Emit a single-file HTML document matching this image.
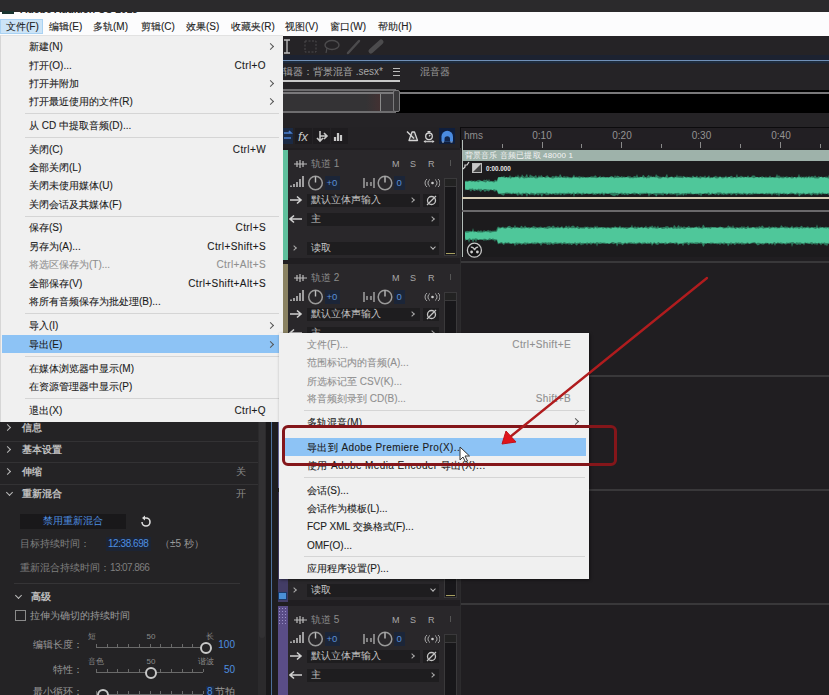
<!DOCTYPE html>
<html><head><meta charset="utf-8"><style>
*{box-sizing:border-box}
html,body{margin:0;padding:0}
body{width:829px;height:695px;overflow:hidden;position:relative;background:#201e21;font-family:"Liberation Sans",sans-serif;font-size:10px;color:#222}
.a{position:absolute}
.t{position:absolute;white-space:nowrap;line-height:12px}
.k{-webkit-text-stroke:0.1px currentColor}
.mi{position:absolute;top:21px;line-height:12px;white-space:nowrap;color:#222;font-size:10px}
.it{position:absolute;left:29px;white-space:nowrap;line-height:12px;color:#1b1b1b}
.sc{position:absolute;white-space:nowrap;line-height:12px;color:#1b1b1b;text-align:right}
.dis{color:#8f8f8f}
.sep{position:absolute;height:1px;background:#d5d5d5}
.chev{position:absolute;width:5px;height:5px;border-right:1px solid #555;border-top:1px solid #555;transform:rotate(45deg)}
</style></head><body>
<div class="a" style="left:0px;top:0px;width:829px;height:12px;background:#2b2a2c;"></div>
<div class="a" style="left:0px;top:12px;width:829px;height:24px;background:#fcfcfd;"></div>
<div class="t " style="left:20px;top:3px;font-size:10.5px;color:#2b2a2c;font-weight:bold;letter-spacing:-0.2px">Adobe Audition CC 2015</div>
<div class="a" style="left:2px;top:11px;width:12px;height:3px;background:#17322f;"></div>
<div class="a" style="left:0px;top:36px;width:829px;height:91px;background:#252326;"></div>
<div class="a" style="left:0px;top:19px;width:43px;height:15px;background:#cce4f7;border:1px solid #a9d2f3"></div>
<div class="t k" style="left:6px;top:21px;color:#222;">文件(F)</div>
<div class="t k" style="left:49px;top:21px;color:#222;">编辑(E)</div>
<div class="t k" style="left:93px;top:21px;color:#222;">多轨(M)</div>
<div class="t k" style="left:141px;top:21px;color:#222;">剪辑(C)</div>
<div class="t k" style="left:186px;top:21px;color:#222;">效果(S)</div>
<div class="t k" style="left:231px;top:21px;color:#222;">收藏夹(R)</div>
<div class="t k" style="left:285px;top:21px;color:#222;">视图(V)</div>
<div class="t k" style="left:330px;top:21px;color:#222;">窗口(W)</div>
<div class="t k" style="left:378px;top:21px;color:#222;">帮助(H)</div>
<svg class="a" style="left:280px;top:36px" width="120" height="22" viewBox="0 0 120 22"><path d="M4 4h6M7 4v13M4 17h6" stroke="#bdbdbd" stroke-width="1.3" fill="none"/><rect x="25" y="5" width="11" height="11" stroke="#4c4b4d" stroke-width="1" stroke-dasharray="2 1.5" fill="none"/><ellipse cx="52" cy="9" rx="7" ry="4.5" stroke="#4c4b4d" stroke-width="1.4" fill="none"/><path d="M47 12 l-1 5" stroke="#4c4b4d" stroke-width="1.2"/><path d="M68 17 L79 5" stroke="#4c4b4d" stroke-width="2.5" stroke-linecap="round"/><path d="M91 15 L101 6" stroke="#4c4b4d" stroke-width="5" stroke-linecap="round"/></svg>
<div class="a" style="left:0px;top:55px;width:829px;height:9px;background:#1c2231;"></div>
<div class="a" style="left:0px;top:60px;width:829px;height:1px;background:#7090b8;"></div>
<div class="a" style="left:0px;top:61px;width:829px;height:2px;background:#1f2c3c;"></div>
<div class="t " style="left:273px;top:66px;color:#a8a8a8;">编辑器：背景混音 .sesx*</div>
<div class="a" style="left:393px;top:68px;width:7px;height:8px;border-top:1px solid #bbb;border-bottom:1px solid #bbb"></div>
<div class="a" style="left:393px;top:71px;width:7px;height:1px;background:#bbb;"></div>
<div class="a" style="left:283px;top:80px;width:117px;height:2px;background:#c8c8c8;"></div>
<div class="t " style="left:420px;top:66px;color:#9a9a9a;">混音器</div>
<div class="a" style="left:278px;top:90px;width:551px;height:23px;background:#000;"></div>
<div class="a" style="left:278px;top:90px;width:118px;height:23px;background:#343335;"></div>
<div class="a" style="left:381px;top:94px;width:15px;height:18px;background:#3c3a3d;"></div>
<div class="a" style="left:278px;top:89px;width:118px;height:2px;background:#6e6d6f;"></div>
<div class="a" style="left:278px;top:92px;width:551px;height:2px;background:#7a797b;"></div>
<div class="a" style="left:278px;top:111px;width:118px;height:2px;background:#6e6d6f;"></div>
<div class="a" style="left:366px;top:94px;width:14px;height:17px;background:linear-gradient(90deg,rgba(90,40,40,0),rgba(100,45,45,.3))"></div>
<div class="a" style="left:380px;top:94px;width:1px;height:17px;background:#8a8a8a;"></div>
<div class="a" style="left:393px;top:90px;width:7px;height:22px;border:1.5px solid #7a797b;border-radius:2px;background:#3a393b"></div>
<div class="a" style="left:278px;top:127px;width:183px;height:21px;background:#242225;"></div>
<div class="a" style="left:461px;top:127px;width:368px;height:21px;background:#221f23;"></div>
<div class="a" style="left:461px;top:127px;width:368px;height:1px;background:#0c0b0d;"></div>
<div class="a" style="left:460px;top:127px;width:1px;height:21px;background:#0c0b0d;"></div>
<div class="a" style="left:460px;top:148px;width:1px;height:547px;background:#2c2b2d;"></div>
<div class="a" style="left:295px;top:128px;width:17px;height:16px;background:#1e1c1f;"></div>
<div class="a" style="left:313px;top:128px;width:17px;height:16px;background:#1e1c1f;"></div>
<div class="a" style="left:331px;top:128px;width:17px;height:16px;background:#1e1c1f;"></div>
<div class="a" style="left:283px;top:128px;width:10px;height:16px;background:#1b2a44;"></div>
<svg class="a" style="left:283px;top:128px" width="70" height="16" viewBox="0 0 70 16"><path d="M1 5h7l-2-2M1 10h7" stroke="#4a7fd0" stroke-width="1.6" fill="none"/><text x="15" y="12.5" font-family="Liberation Sans" font-style="italic" font-size="13" fill="#c4c4c4">fx</text><path d="M37 3v10M34 10l3 3 3-3M37 8h7M41 5l3 3-3 3" stroke="#c9c9c9" stroke-width="1.6" fill="none"/><path d="M52 13v-4M55 13v-8M58 13v-6" stroke="#c9c9c9" stroke-width="2.2" fill="none"/></svg>
<svg class="a" style="left:400px;top:124px" width="60" height="26" viewBox="0 0 60 26"><path d="M9 16.5 L12 8 L14.5 8 L17.5 16.5 Z" stroke="#d4d4d4" stroke-width="1.3" fill="#3a393b" stroke-linejoin="round"/><path d="M7 7.5 L14 14.5" stroke="#d4d4d4" stroke-width="1.4"/><circle cx="29" cy="12.3" r="3.3" stroke="#d4d4d4" stroke-width="1.3" fill="none"/><path d="M29 12.3 l1.3-1.3M27.5 7.5h3M29 7.5v1.5" stroke="#d4d4d4" stroke-width="1.2" fill="none"/><path d="M25 17.5h8" stroke="#bdbdbd" stroke-width="1.5"/><path d="M23.5 17.5l2-1.6v3.2z M34.5 17.5l-2-1.6v3.2z" fill="#d4d4d4"/><rect x="39" y="4" width="16" height="16" fill="#0f1e3c"/><path d="M41.5 17.5 V12.5 a5.75 5.75 0 0 1 11.5 0 V17.5 Z" fill="#4a8be0"/><path d="M47.25 11.5 V17.5 M44.5 15 a2.75 2.75 0 0 1 5.5 0 V17.5 h-5.5 Z" stroke="none" fill="#13264a"/><path d="M42 18h2M50.5 18h2" stroke="#a8c8f0" stroke-width="1"/></svg>
<div class="t " style="left:464px;top:130px;color:#8e8e8e;">hms</div>
<div class="t" style="left:522px;width:40px;text-align:center;top:130px;color:#949494">0:10</div>
<div class="t" style="left:602px;width:40px;text-align:center;top:130px;color:#949494">0:20</div>
<div class="t" style="left:681.5px;width:40px;text-align:center;top:130px;color:#949494">0:30</div>
<div class="t" style="left:761px;width:40px;text-align:center;top:130px;color:#949494">0:40</div>
<div class="a" style="left:462px;top:142px;width:1px;height:6px;background:#8a8a8a;"></div>
<div class="a" style="left:502px;top:144px;width:1px;height:4px;background:#8a8a8a;"></div>
<div class="a" style="left:542px;top:142px;width:1px;height:6px;background:#8a8a8a;"></div>
<div class="a" style="left:581px;top:144px;width:1px;height:4px;background:#8a8a8a;"></div>
<div class="a" style="left:621px;top:142px;width:1px;height:6px;background:#8a8a8a;"></div>
<div class="a" style="left:661px;top:144px;width:1px;height:4px;background:#8a8a8a;"></div>
<div class="a" style="left:700px;top:142px;width:1px;height:6px;background:#8a8a8a;"></div>
<div class="a" style="left:740px;top:144px;width:1px;height:4px;background:#8a8a8a;"></div>
<div class="a" style="left:780px;top:142px;width:1px;height:6px;background:#8a8a8a;"></div>
<div class="a" style="left:820px;top:144px;width:1px;height:4px;background:#8a8a8a;"></div>
<div class="a" style="left:860px;top:142px;width:1px;height:6px;background:#8a8a8a;"></div>
<div class="a" style="left:899px;top:144px;width:1px;height:4px;background:#8a8a8a;"></div>
<div class="a" style="left:278px;top:150px;width:10px;height:110px;background:#5fbf9c;"></div>
<div class="a" style="left:288px;top:150px;width:172px;height:108px;background:#29272a;"></div>
<div class="a" style="left:461px;top:261px;width:368px;height:2px;background:#39383a;"></div>
<svg class="a" style="left:294px;top:159px" width="14" height="10" viewBox="0 0 14 10"><path d="M0 5h13M3 2v6M6 1v8M9 2v6" stroke="#bcbcbc" stroke-width="1.2"/></svg>
<div class="t " style="left:311px;top:158px;color:#8c8c8c;">轨道 1</div>
<div class="t " style="left:392px;top:158px;font-size:9px;color:#a8a8a8;">M</div>
<div class="t " style="left:410px;top:158px;font-size:9px;color:#a8a8a8;">S</div>
<div class="t " style="left:428px;top:158px;font-size:9px;color:#a8a8a8;">R</div>
<div class="a" style="left:450px;top:160px;width:1px;height:6px;background:#555;"></div>
<svg class="a" style="left:290px;top:174px" width="150" height="18" viewBox="0 0 150 18"><path d="M1 14v-1.5M4 14v-3M7 14v-5M10 14v-8M13 14v-11" stroke="#bdbdbd" stroke-width="1.6" transform="translate(0,-1)"/><circle cx="25.5" cy="9" r="6.8" stroke="#9a9a9a" stroke-width="1.5" fill="none"/><path d="M25.5 2.5v6" stroke="#bdbdbd" stroke-width="1.4"/><rect x="35" y="2" width="15" height="14" fill="#1b2538"/><text x="36.5" y="12.3" font-size="9.5" fill="#5a8fd6" font-family="Liberation Sans">+0</text><path d="M74 4v10M84 4v10M77 8v4M81 8v4M79 10h0.1" stroke="#a9a9a9" stroke-width="1.4"/><circle cx="95" cy="9" r="6.8" stroke="#9a9a9a" stroke-width="1.5" fill="none"/><path d="M95 2.5v6" stroke="#bdbdbd" stroke-width="1.4"/><rect x="104" y="2" width="11" height="14" fill="#1b2538"/><text x="106.5" y="12.3" font-size="9.5" fill="#5a8fd6" font-family="Liberation Sans">0</text><path d="M137 5 a5 5 0 0 0 0 8M140 5.5 a4 4 0 0 0 0 7M148 5 a5 5 0 0 1 0 8M145 5.5 a4 4 0 0 1 0 7" stroke="#aaa" stroke-width="1" fill="none"/><circle cx="142.5" cy="9" r="1.3" fill="#ccc"/></svg>
<div class="a" style="left:307px;top:194px;width:113px;height:13px;background:#1e1d1f;"></div>
<svg class="a" style="left:289px;top:195px" width="14" height="10"><path d="M1 5h11M8 1.5l4 3.5-4 3.5" stroke="#d0d0d0" stroke-width="1.6" fill="none"/></svg>
<div class="t " style="left:311px;top:194px;color:#c4c4c4;">默认立体声输入</div>
<div class="chev" style="left:410px;top:198px;border-color:#aaa;width:4px;height:4px"></div>
<div class="a" style="left:423px;top:194px;width:16px;height:13px;background:#1e1d1f;"></div>
<svg class="a" style="left:425px;top:194px" width="13" height="13"><circle cx="6.5" cy="6.5" r="4" stroke="#c4c4c4" stroke-width="1.3" fill="none"/><path d="M2 11L11 2" stroke="#c4c4c4" stroke-width="1.3"/></svg>
<div class="a" style="left:307px;top:213px;width:132px;height:13px;background:#1e1d1f;"></div>
<svg class="a" style="left:289px;top:214px" width="14" height="10"><path d="M13 5H2M5 1.5L1 5l4 3.5" stroke="#d0d0d0" stroke-width="1.6" fill="none"/></svg>
<div class="t " style="left:311px;top:213px;color:#c4c4c4;">主</div>
<div class="chev" style="left:430px;top:217px;border-color:#aaa;width:4px;height:4px"></div>
<div class="chev" style="left:292px;top:246px;border-color:#aaa;width:4px;height:4px"></div>
<div class="a" style="left:307px;top:242px;width:132px;height:13px;background:#1e1d1f;"></div>
<div class="t " style="left:311px;top:242px;color:#c4c4c4;">读取</div>
<div class="chev" style="left:431px;top:245px;border-color:#bbb;width:4px;height:4px;transform:rotate(135deg)"></div>
<div class="a" style="left:444px;top:178px;width:13px;height:78px;background:#18171a;border:1px solid #3a393b"></div>
<div class="a" style="left:445px;top:179px;width:11px;height:8px;background:#222;border-bottom:1px solid #3a393b"></div>
<div class="a" style="left:446px;top:253px;width:9px;height:1px;background:#a8a060;"></div>
<div class="a" style="left:278px;top:264px;width:10px;height:110px;background:#8a8262;"></div>
<div class="a" style="left:288px;top:264px;width:172px;height:108px;background:#29272a;"></div>
<div class="a" style="left:461px;top:375px;width:368px;height:2px;background:#39383a;"></div>
<svg class="a" style="left:294px;top:273px" width="14" height="10" viewBox="0 0 14 10"><path d="M0 5h13M3 2v6M6 1v8M9 2v6" stroke="#bcbcbc" stroke-width="1.2"/></svg>
<div class="t " style="left:311px;top:272px;color:#8c8c8c;">轨道 2</div>
<div class="t " style="left:392px;top:272px;font-size:9px;color:#a8a8a8;">M</div>
<div class="t " style="left:410px;top:272px;font-size:9px;color:#a8a8a8;">S</div>
<div class="t " style="left:428px;top:272px;font-size:9px;color:#a8a8a8;">R</div>
<div class="a" style="left:450px;top:274px;width:1px;height:6px;background:#555;"></div>
<svg class="a" style="left:290px;top:288px" width="150" height="18" viewBox="0 0 150 18"><path d="M1 14v-1.5M4 14v-3M7 14v-5M10 14v-8M13 14v-11" stroke="#bdbdbd" stroke-width="1.6" transform="translate(0,-1)"/><circle cx="25.5" cy="9" r="6.8" stroke="#9a9a9a" stroke-width="1.5" fill="none"/><path d="M25.5 2.5v6" stroke="#bdbdbd" stroke-width="1.4"/><rect x="35" y="2" width="15" height="14" fill="#1b2538"/><text x="36.5" y="12.3" font-size="9.5" fill="#5a8fd6" font-family="Liberation Sans">+0</text><path d="M74 4v10M84 4v10M77 8v4M81 8v4M79 10h0.1" stroke="#a9a9a9" stroke-width="1.4"/><circle cx="95" cy="9" r="6.8" stroke="#9a9a9a" stroke-width="1.5" fill="none"/><path d="M95 2.5v6" stroke="#bdbdbd" stroke-width="1.4"/><rect x="104" y="2" width="11" height="14" fill="#1b2538"/><text x="106.5" y="12.3" font-size="9.5" fill="#5a8fd6" font-family="Liberation Sans">0</text><path d="M137 5 a5 5 0 0 0 0 8M140 5.5 a4 4 0 0 0 0 7M148 5 a5 5 0 0 1 0 8M145 5.5 a4 4 0 0 1 0 7" stroke="#aaa" stroke-width="1" fill="none"/><circle cx="142.5" cy="9" r="1.3" fill="#ccc"/></svg>
<div class="a" style="left:307px;top:308px;width:113px;height:13px;background:#1e1d1f;"></div>
<svg class="a" style="left:289px;top:309px" width="14" height="10"><path d="M1 5h11M8 1.5l4 3.5-4 3.5" stroke="#d0d0d0" stroke-width="1.6" fill="none"/></svg>
<div class="t " style="left:311px;top:308px;color:#c4c4c4;">默认立体声输入</div>
<div class="chev" style="left:410px;top:312px;border-color:#aaa;width:4px;height:4px"></div>
<div class="a" style="left:423px;top:308px;width:16px;height:13px;background:#1e1d1f;"></div>
<svg class="a" style="left:425px;top:308px" width="13" height="13"><circle cx="6.5" cy="6.5" r="4" stroke="#c4c4c4" stroke-width="1.3" fill="none"/><path d="M2 11L11 2" stroke="#c4c4c4" stroke-width="1.3"/></svg>
<div class="a" style="left:307px;top:327px;width:132px;height:13px;background:#1e1d1f;"></div>
<svg class="a" style="left:289px;top:328px" width="14" height="10"><path d="M13 5H2M5 1.5L1 5l4 3.5" stroke="#d0d0d0" stroke-width="1.6" fill="none"/></svg>
<div class="t " style="left:311px;top:327px;color:#c4c4c4;">主</div>
<div class="chev" style="left:430px;top:331px;border-color:#aaa;width:4px;height:4px"></div>
<div class="chev" style="left:292px;top:360px;border-color:#aaa;width:4px;height:4px"></div>
<div class="a" style="left:307px;top:356px;width:132px;height:13px;background:#1e1d1f;"></div>
<div class="t " style="left:311px;top:356px;color:#c4c4c4;">读取</div>
<div class="chev" style="left:431px;top:359px;border-color:#bbb;width:4px;height:4px;transform:rotate(135deg)"></div>
<div class="a" style="left:444px;top:292px;width:13px;height:78px;background:#18171a;border:1px solid #3a393b"></div>
<div class="a" style="left:445px;top:293px;width:11px;height:8px;background:#222;border-bottom:1px solid #3a393b"></div>
<div class="a" style="left:446px;top:367px;width:9px;height:1px;background:#a8a060;"></div>
<div class="a" style="left:278px;top:378px;width:10px;height:110px;background:#6a6aa0;"></div>
<div class="a" style="left:288px;top:378px;width:172px;height:108px;background:#29272a;"></div>
<div class="a" style="left:461px;top:489px;width:368px;height:2px;background:#39383a;"></div>
<svg class="a" style="left:294px;top:387px" width="14" height="10" viewBox="0 0 14 10"><path d="M0 5h13M3 2v6M6 1v8M9 2v6" stroke="#bcbcbc" stroke-width="1.2"/></svg>
<div class="t " style="left:311px;top:386px;color:#8c8c8c;">轨道 3</div>
<div class="t " style="left:392px;top:386px;font-size:9px;color:#a8a8a8;">M</div>
<div class="t " style="left:410px;top:386px;font-size:9px;color:#a8a8a8;">S</div>
<div class="t " style="left:428px;top:386px;font-size:9px;color:#a8a8a8;">R</div>
<div class="a" style="left:450px;top:388px;width:1px;height:6px;background:#555;"></div>
<svg class="a" style="left:290px;top:402px" width="150" height="18" viewBox="0 0 150 18"><path d="M1 14v-1.5M4 14v-3M7 14v-5M10 14v-8M13 14v-11" stroke="#bdbdbd" stroke-width="1.6" transform="translate(0,-1)"/><circle cx="25.5" cy="9" r="6.8" stroke="#9a9a9a" stroke-width="1.5" fill="none"/><path d="M25.5 2.5v6" stroke="#bdbdbd" stroke-width="1.4"/><rect x="35" y="2" width="15" height="14" fill="#1b2538"/><text x="36.5" y="12.3" font-size="9.5" fill="#5a8fd6" font-family="Liberation Sans">+0</text><path d="M74 4v10M84 4v10M77 8v4M81 8v4M79 10h0.1" stroke="#a9a9a9" stroke-width="1.4"/><circle cx="95" cy="9" r="6.8" stroke="#9a9a9a" stroke-width="1.5" fill="none"/><path d="M95 2.5v6" stroke="#bdbdbd" stroke-width="1.4"/><rect x="104" y="2" width="11" height="14" fill="#1b2538"/><text x="106.5" y="12.3" font-size="9.5" fill="#5a8fd6" font-family="Liberation Sans">0</text><path d="M137 5 a5 5 0 0 0 0 8M140 5.5 a4 4 0 0 0 0 7M148 5 a5 5 0 0 1 0 8M145 5.5 a4 4 0 0 1 0 7" stroke="#aaa" stroke-width="1" fill="none"/><circle cx="142.5" cy="9" r="1.3" fill="#ccc"/></svg>
<div class="a" style="left:307px;top:422px;width:113px;height:13px;background:#1e1d1f;"></div>
<svg class="a" style="left:289px;top:423px" width="14" height="10"><path d="M1 5h11M8 1.5l4 3.5-4 3.5" stroke="#d0d0d0" stroke-width="1.6" fill="none"/></svg>
<div class="t " style="left:311px;top:422px;color:#c4c4c4;">默认立体声输入</div>
<div class="chev" style="left:410px;top:426px;border-color:#aaa;width:4px;height:4px"></div>
<div class="a" style="left:423px;top:422px;width:16px;height:13px;background:#1e1d1f;"></div>
<svg class="a" style="left:425px;top:422px" width="13" height="13"><circle cx="6.5" cy="6.5" r="4" stroke="#c4c4c4" stroke-width="1.3" fill="none"/><path d="M2 11L11 2" stroke="#c4c4c4" stroke-width="1.3"/></svg>
<div class="a" style="left:307px;top:441px;width:132px;height:13px;background:#1e1d1f;"></div>
<svg class="a" style="left:289px;top:442px" width="14" height="10"><path d="M13 5H2M5 1.5L1 5l4 3.5" stroke="#d0d0d0" stroke-width="1.6" fill="none"/></svg>
<div class="t " style="left:311px;top:441px;color:#c4c4c4;">主</div>
<div class="chev" style="left:430px;top:445px;border-color:#aaa;width:4px;height:4px"></div>
<div class="chev" style="left:292px;top:474px;border-color:#aaa;width:4px;height:4px"></div>
<div class="a" style="left:307px;top:470px;width:132px;height:13px;background:#1e1d1f;"></div>
<div class="t " style="left:311px;top:470px;color:#c4c4c4;">读取</div>
<div class="chev" style="left:431px;top:473px;border-color:#bbb;width:4px;height:4px;transform:rotate(135deg)"></div>
<div class="a" style="left:444px;top:406px;width:13px;height:78px;background:#18171a;border:1px solid #3a393b"></div>
<div class="a" style="left:445px;top:407px;width:11px;height:8px;background:#222;border-bottom:1px solid #3a393b"></div>
<div class="a" style="left:446px;top:481px;width:9px;height:1px;background:#a8a060;"></div>
<div class="a" style="left:278px;top:492px;width:10px;height:110px;background:#433d66;"></div>
<div class="a" style="left:288px;top:492px;width:172px;height:108px;background:#29272a;"></div>
<div class="a" style="left:461px;top:603px;width:368px;height:2px;background:#39383a;"></div>
<svg class="a" style="left:294px;top:501px" width="14" height="10" viewBox="0 0 14 10"><path d="M0 5h13M3 2v6M6 1v8M9 2v6" stroke="#bcbcbc" stroke-width="1.2"/></svg>
<div class="t " style="left:311px;top:500px;color:#8c8c8c;">轨道 4</div>
<div class="t " style="left:392px;top:500px;font-size:9px;color:#a8a8a8;">M</div>
<div class="t " style="left:410px;top:500px;font-size:9px;color:#a8a8a8;">S</div>
<div class="t " style="left:428px;top:500px;font-size:9px;color:#a8a8a8;">R</div>
<div class="a" style="left:450px;top:502px;width:1px;height:6px;background:#555;"></div>
<svg class="a" style="left:290px;top:516px" width="150" height="18" viewBox="0 0 150 18"><path d="M1 14v-1.5M4 14v-3M7 14v-5M10 14v-8M13 14v-11" stroke="#bdbdbd" stroke-width="1.6" transform="translate(0,-1)"/><circle cx="25.5" cy="9" r="6.8" stroke="#9a9a9a" stroke-width="1.5" fill="none"/><path d="M25.5 2.5v6" stroke="#bdbdbd" stroke-width="1.4"/><rect x="35" y="2" width="15" height="14" fill="#1b2538"/><text x="36.5" y="12.3" font-size="9.5" fill="#5a8fd6" font-family="Liberation Sans">+0</text><path d="M74 4v10M84 4v10M77 8v4M81 8v4M79 10h0.1" stroke="#a9a9a9" stroke-width="1.4"/><circle cx="95" cy="9" r="6.8" stroke="#9a9a9a" stroke-width="1.5" fill="none"/><path d="M95 2.5v6" stroke="#bdbdbd" stroke-width="1.4"/><rect x="104" y="2" width="11" height="14" fill="#1b2538"/><text x="106.5" y="12.3" font-size="9.5" fill="#5a8fd6" font-family="Liberation Sans">0</text><path d="M137 5 a5 5 0 0 0 0 8M140 5.5 a4 4 0 0 0 0 7M148 5 a5 5 0 0 1 0 8M145 5.5 a4 4 0 0 1 0 7" stroke="#aaa" stroke-width="1" fill="none"/><circle cx="142.5" cy="9" r="1.3" fill="#ccc"/></svg>
<div class="a" style="left:307px;top:536px;width:113px;height:13px;background:#1e1d1f;"></div>
<svg class="a" style="left:289px;top:537px" width="14" height="10"><path d="M1 5h11M8 1.5l4 3.5-4 3.5" stroke="#d0d0d0" stroke-width="1.6" fill="none"/></svg>
<div class="t " style="left:311px;top:536px;color:#c4c4c4;">默认立体声输入</div>
<div class="chev" style="left:410px;top:540px;border-color:#aaa;width:4px;height:4px"></div>
<div class="a" style="left:423px;top:536px;width:16px;height:13px;background:#1e1d1f;"></div>
<svg class="a" style="left:425px;top:536px" width="13" height="13"><circle cx="6.5" cy="6.5" r="4" stroke="#c4c4c4" stroke-width="1.3" fill="none"/><path d="M2 11L11 2" stroke="#c4c4c4" stroke-width="1.3"/></svg>
<div class="a" style="left:307px;top:555px;width:132px;height:13px;background:#1e1d1f;"></div>
<svg class="a" style="left:289px;top:556px" width="14" height="10"><path d="M13 5H2M5 1.5L1 5l4 3.5" stroke="#d0d0d0" stroke-width="1.6" fill="none"/></svg>
<div class="t " style="left:311px;top:555px;color:#c4c4c4;">主</div>
<div class="chev" style="left:430px;top:559px;border-color:#aaa;width:4px;height:4px"></div>
<div class="chev" style="left:292px;top:588px;border-color:#aaa;width:4px;height:4px"></div>
<div class="a" style="left:307px;top:584px;width:132px;height:13px;background:#1e1d1f;"></div>
<div class="t " style="left:311px;top:584px;color:#c4c4c4;">读取</div>
<div class="chev" style="left:431px;top:587px;border-color:#bbb;width:4px;height:4px;transform:rotate(135deg)"></div>
<div class="a" style="left:444px;top:520px;width:13px;height:78px;background:#18171a;border:1px solid #3a393b"></div>
<div class="a" style="left:445px;top:521px;width:11px;height:8px;background:#222;border-bottom:1px solid #3a393b"></div>
<div class="a" style="left:446px;top:595px;width:9px;height:1px;background:#a8a060;"></div>
<div class="a" style="left:278px;top:606px;width:10px;height:110px;background:#5a4d87;"></div>
<div class="a" style="left:288px;top:606px;width:172px;height:108px;background:#29272a;"></div>
<div class="a" style="left:461px;top:717px;width:368px;height:2px;background:#39383a;"></div>
<svg class="a" style="left:294px;top:615px" width="14" height="10" viewBox="0 0 14 10"><path d="M0 5h13M3 2v6M6 1v8M9 2v6" stroke="#bcbcbc" stroke-width="1.2"/></svg>
<div class="t " style="left:311px;top:614px;color:#8c8c8c;">轨道 5</div>
<div class="t " style="left:392px;top:614px;font-size:9px;color:#a8a8a8;">M</div>
<div class="t " style="left:410px;top:614px;font-size:9px;color:#a8a8a8;">S</div>
<div class="t " style="left:428px;top:614px;font-size:9px;color:#a8a8a8;">R</div>
<div class="a" style="left:450px;top:616px;width:1px;height:6px;background:#555;"></div>
<svg class="a" style="left:290px;top:630px" width="150" height="18" viewBox="0 0 150 18"><path d="M1 14v-1.5M4 14v-3M7 14v-5M10 14v-8M13 14v-11" stroke="#bdbdbd" stroke-width="1.6" transform="translate(0,-1)"/><circle cx="25.5" cy="9" r="6.8" stroke="#9a9a9a" stroke-width="1.5" fill="none"/><path d="M25.5 2.5v6" stroke="#bdbdbd" stroke-width="1.4"/><rect x="35" y="2" width="15" height="14" fill="#1b2538"/><text x="36.5" y="12.3" font-size="9.5" fill="#5a8fd6" font-family="Liberation Sans">+0</text><path d="M74 4v10M84 4v10M77 8v4M81 8v4M79 10h0.1" stroke="#a9a9a9" stroke-width="1.4"/><circle cx="95" cy="9" r="6.8" stroke="#9a9a9a" stroke-width="1.5" fill="none"/><path d="M95 2.5v6" stroke="#bdbdbd" stroke-width="1.4"/><rect x="104" y="2" width="11" height="14" fill="#1b2538"/><text x="106.5" y="12.3" font-size="9.5" fill="#5a8fd6" font-family="Liberation Sans">0</text><path d="M137 5 a5 5 0 0 0 0 8M140 5.5 a4 4 0 0 0 0 7M148 5 a5 5 0 0 1 0 8M145 5.5 a4 4 0 0 1 0 7" stroke="#aaa" stroke-width="1" fill="none"/><circle cx="142.5" cy="9" r="1.3" fill="#ccc"/></svg>
<div class="a" style="left:307px;top:650px;width:113px;height:13px;background:#1e1d1f;"></div>
<svg class="a" style="left:289px;top:651px" width="14" height="10"><path d="M1 5h11M8 1.5l4 3.5-4 3.5" stroke="#d0d0d0" stroke-width="1.6" fill="none"/></svg>
<div class="t " style="left:311px;top:650px;color:#c4c4c4;">默认立体声输入</div>
<div class="chev" style="left:410px;top:654px;border-color:#aaa;width:4px;height:4px"></div>
<div class="a" style="left:423px;top:650px;width:16px;height:13px;background:#1e1d1f;"></div>
<svg class="a" style="left:425px;top:650px" width="13" height="13"><circle cx="6.5" cy="6.5" r="4" stroke="#c4c4c4" stroke-width="1.3" fill="none"/><path d="M2 11L11 2" stroke="#c4c4c4" stroke-width="1.3"/></svg>
<div class="a" style="left:307px;top:669px;width:132px;height:13px;background:#1e1d1f;"></div>
<svg class="a" style="left:289px;top:670px" width="14" height="10"><path d="M13 5H2M5 1.5L1 5l4 3.5" stroke="#d0d0d0" stroke-width="1.6" fill="none"/></svg>
<div class="t " style="left:311px;top:669px;color:#c4c4c4;">主</div>
<div class="chev" style="left:430px;top:673px;border-color:#aaa;width:4px;height:4px"></div>
<div class="chev" style="left:292px;top:702px;border-color:#aaa;width:4px;height:4px"></div>
<div class="a" style="left:307px;top:698px;width:132px;height:13px;background:#1e1d1f;"></div>
<div class="t " style="left:311px;top:698px;color:#c4c4c4;">读取</div>
<div class="chev" style="left:431px;top:701px;border-color:#bbb;width:4px;height:4px;transform:rotate(135deg)"></div>
<div class="a" style="left:444px;top:634px;width:13px;height:78px;background:#18171a;border:1px solid #3a393b"></div>
<div class="a" style="left:445px;top:635px;width:11px;height:8px;background:#222;border-bottom:1px solid #3a393b"></div>
<div class="a" style="left:446px;top:709px;width:9px;height:1px;background:#a8a060;"></div>
<div class="a" style="left:278px;top:592px;width:9px;height:8px;background:#4a8fd6;border:1px solid #1a3a6a"></div>
<div class="a" style="left:279px;top:608px;width:1px;height:1px;background:#9a90c8;"></div>
<div class="a" style="left:282px;top:608px;width:1px;height:1px;background:#9a90c8;"></div>
<div class="a" style="left:285px;top:608px;width:1px;height:1px;background:#9a90c8;"></div>
<div class="a" style="left:279px;top:611px;width:1px;height:1px;background:#9a90c8;"></div>
<div class="a" style="left:282px;top:611px;width:1px;height:1px;background:#9a90c8;"></div>
<div class="a" style="left:285px;top:611px;width:1px;height:1px;background:#9a90c8;"></div>
<div class="a" style="left:279px;top:614px;width:1px;height:1px;background:#9a90c8;"></div>
<div class="a" style="left:282px;top:614px;width:1px;height:1px;background:#9a90c8;"></div>
<div class="a" style="left:285px;top:614px;width:1px;height:1px;background:#9a90c8;"></div>
<div class="a" style="left:279px;top:617px;width:1px;height:1px;background:#9a90c8;"></div>
<div class="a" style="left:282px;top:617px;width:1px;height:1px;background:#9a90c8;"></div>
<div class="a" style="left:285px;top:617px;width:1px;height:1px;background:#9a90c8;"></div>
<div class="a" style="left:279px;top:620px;width:1px;height:1px;background:#9a90c8;"></div>
<div class="a" style="left:282px;top:620px;width:1px;height:1px;background:#9a90c8;"></div>
<div class="a" style="left:285px;top:620px;width:1px;height:1px;background:#9a90c8;"></div>
<div class="a" style="left:279px;top:623px;width:1px;height:1px;background:#9a90c8;"></div>
<div class="a" style="left:282px;top:623px;width:1px;height:1px;background:#9a90c8;"></div>
<div class="a" style="left:285px;top:623px;width:1px;height:1px;background:#9a90c8;"></div>
<div class="a" style="left:462px;top:150px;width:367px;height:11px;background:#9eb2aa;"></div>
<div class="t " style="left:465px;top:149.5px;font-size:8px;color:#f4f4f4;letter-spacing:0.15px">背景音乐 音频已提取 48000 1</div>
<div class="a" style="left:462px;top:161px;width:367px;height:96px;background:#1c1b1d;"></div>
<div class="a" style="left:462px;top:140px;width:1px;height:117px;background:#b5bfba;"></div>
<svg class="a" style="left:462px;top:161px" width="10" height="10"><path d="M1 8 L3 6 L3 4 L5 4 L7 1" stroke="#d8d8d8" stroke-width="1.2" fill="none"/></svg>
<div class="a" style="left:472px;top:163px;width:10px;height:10px;background:#888;background:linear-gradient(135deg,#c8c8c8 45%,#444 55%);border:1px solid #bbb"></div>
<div class="t " style="left:486px;top:163px;font-size:6.3px;color:#e8e8e8;font-weight:bold">0:00.000</div>
<svg class="a" style="left:0;top:0" width="829" height="695"><path d="M465,181.1 L466,180.8 L467,180.8 L468,181.1 L469,180.6 L470,180.7 L471,180.4 L472,180.5 L473,181.1 L474,180.8 L475,180.4 L476,181.2 L477,180.3 L478,180.3 L479,179.7 L480,180.1 L481,180.6 L482,180.9 L483,180.8 L484,179.6 L485,180.1 L486,180.0 L487,179.2 L488,181.1 L489,179.1 L490,180.9 L491,180.8 L492,181.2 L493,181.0 L494,180.9 L495,179.4 L496,180.2 L497,180.5 L498,177.2 L499,176.9 L500,177.3 L501,176.9 L502,176.2 L503,177.2 L504,175.5 L505,177.0 L506,177.2 L507,177.2 L508,177.3 L509,177.0 L510,175.1 L511,177.0 L512,176.6 L513,176.9 L514,177.0 L515,177.0 L516,175.4 L517,177.2 L518,174.2 L519,177.0 L520,176.2 L521,177.1 L522,174.2 L523,175.8 L524,176.6 L525,177.1 L526,175.3 L527,173.7 L528,177.1 L529,177.1 L530,174.2 L531,175.6 L532,175.4 L533,176.3 L534,176.6 L535,175.9 L536,174.7 L537,177.2 L538,177.0 L539,174.9 L540,177.0 L541,174.9 L542,175.7 L543,176.9 L544,177.1 L545,177.0 L546,176.0 L547,175.4 L548,175.5 L549,177.3 L550,177.3 L551,176.9 L552,176.6 L553,175.7 L554,176.8 L555,176.2 L556,175.4 L557,176.2 L558,176.4 L559,176.6 L560,173.9 L561,175.3 L562,177.2 L563,177.1 L564,175.7 L565,176.7 L566,176.6 L567,176.6 L568,176.5 L569,177.0 L570,177.1 L571,177.3 L572,177.3 L573,176.2 L574,174.4 L575,177.1 L576,176.7 L577,176.6 L578,177.2 L579,175.8 L580,176.8 L581,176.6 L582,177.1 L583,176.6 L584,176.9 L585,177.2 L586,177.2 L587,177.1 L588,176.7 L589,176.9 L590,177.1 L591,176.2 L592,176.6 L593,176.4 L594,176.5 L595,175.3 L596,175.8 L597,177.0 L598,177.2 L599,177.2 L600,175.5 L601,177.1 L602,177.2 L603,176.5 L604,176.8 L605,177.0 L606,176.9 L607,176.9 L608,177.2 L609,177.3 L610,176.8 L611,175.9 L612,175.9 L613,176.8 L614,177.2 L615,175.0 L616,177.0 L617,175.6 L618,176.1 L619,175.9 L620,177.2 L621,176.6 L622,176.0 L623,177.3 L624,176.3 L625,177.2 L626,177.2 L627,176.9 L628,175.5 L629,176.8 L630,176.0 L631,177.1 L632,176.9 L633,177.1 L634,175.9 L635,176.3 L636,176.6 L637,173.9 L638,176.7 L639,177.1 L640,176.5 L641,176.9 L642,176.7 L643,174.7 L644,175.5 L645,176.9 L646,177.2 L647,176.6 L648,175.6 L649,174.7 L650,177.0 L651,175.2 L652,177.1 L653,176.6 L654,176.4 L655,176.9 L656,174.1 L657,175.4 L658,175.8 L659,176.4 L660,176.7 L661,176.8 L662,177.1 L663,176.4 L664,176.9 L665,177.2 L666,175.5 L667,173.7 L668,177.1 L669,177.2 L670,176.9 L671,176.4 L672,176.5 L673,177.1 L674,176.9 L675,176.5 L676,177.0 L677,174.2 L678,177.3 L679,175.6 L680,177.0 L681,175.5 L682,177.2 L683,175.9 L684,176.0 L685,176.9 L686,176.8 L687,176.7 L688,176.8 L689,177.2 L690,176.5 L691,177.3 L692,176.6 L693,175.6 L694,176.6 L695,177.3 L696,176.4 L697,175.4 L698,177.0 L699,176.9 L700,176.2 L701,176.2 L702,177.1 L703,176.6 L704,177.1 L705,175.3 L706,177.1 L707,177.3 L708,176.6 L709,175.2 L710,177.2 L711,177.2 L712,177.0 L713,177.3 L714,176.6 L715,176.5 L716,175.6 L717,176.9 L718,176.6 L719,177.2 L720,175.7 L721,177.3 L722,176.7 L723,177.1 L724,176.8 L725,177.1 L726,175.4 L727,177.2 L728,176.6 L729,177.1 L730,176.6 L731,175.8 L732,176.0 L733,177.0 L734,177.1 L735,177.2 L736,176.6 L737,173.7 L738,177.2 L739,176.4 L740,176.8 L741,175.5 L742,176.6 L743,176.5 L744,177.1 L745,176.6 L746,177.0 L747,176.8 L748,175.2 L749,176.7 L750,177.2 L751,177.2 L752,175.4 L753,175.7 L754,175.3 L755,176.0 L756,177.2 L757,176.8 L758,177.3 L759,176.9 L760,176.7 L761,177.2 L762,176.0 L763,176.8 L764,177.1 L765,176.9 L766,176.6 L767,177.1 L768,177.3 L769,176.7 L770,175.6 L771,176.9 L772,177.0 L773,176.9 L774,176.9 L775,176.9 L776,176.6 L777,173.7 L778,176.6 L779,175.0 L780,176.7 L781,176.6 L782,177.1 L783,176.5 L784,176.7 L785,176.9 L786,176.6 L787,176.2 L788,177.0 L789,176.8 L790,177.3 L791,177.1 L792,176.3 L793,177.2 L794,177.2 L795,177.2 L796,176.7 L797,177.2 L798,176.6 L799,173.7 L800,176.9 L801,176.6 L802,176.7 L803,177.0 L804,176.6 L805,177.0 L806,176.5 L807,176.6 L808,177.2 L809,175.4 L810,177.1 L811,176.6 L812,176.1 L813,176.5 L814,176.7 L815,175.2 L816,176.4 L817,177.2 L818,176.8 L819,175.9 L820,177.3 L821,176.4 L822,176.8 L823,177.3 L824,177.2 L825,176.8 L826,176.8 L827,176.6 L828,177.2 L829,174.5 L829,195.2 L828,194.2 L827,193.9 L826,194.1 L825,194.2 L824,194.0 L823,193.7 L822,194.5 L821,194.8 L820,193.8 L819,194.4 L818,194.5 L817,195.4 L816,194.1 L815,195.0 L814,193.9 L813,194.2 L812,195.5 L811,195.5 L810,194.8 L809,194.1 L808,194.4 L807,193.8 L806,194.7 L805,194.7 L804,193.9 L803,194.3 L802,194.4 L801,194.4 L800,195.7 L799,196.4 L798,193.8 L797,194.7 L796,194.3 L795,195.0 L794,194.0 L793,193.8 L792,194.1 L791,194.3 L790,194.2 L789,194.0 L788,194.2 L787,195.0 L786,193.8 L785,194.3 L784,194.4 L783,194.0 L782,194.0 L781,194.3 L780,193.9 L779,196.7 L778,194.0 L777,195.5 L776,194.2 L775,194.3 L774,194.4 L773,193.8 L772,196.0 L771,194.2 L770,194.3 L769,194.0 L768,194.4 L767,194.3 L766,194.5 L765,194.0 L764,194.4 L763,194.0 L762,193.9 L761,194.0 L760,194.1 L759,194.3 L758,194.0 L757,194.2 L756,193.9 L755,194.2 L754,193.9 L753,194.6 L752,194.5 L751,194.5 L750,194.8 L749,194.4 L748,193.9 L747,195.4 L746,194.5 L745,194.2 L744,193.9 L743,195.2 L742,193.9 L741,195.1 L740,194.2 L739,194.2 L738,194.1 L737,194.7 L736,195.7 L735,193.7 L734,194.3 L733,194.3 L732,194.4 L731,195.4 L730,193.8 L729,194.0 L728,194.4 L727,194.6 L726,195.0 L725,193.7 L724,195.2 L723,194.4 L722,194.4 L721,194.4 L720,193.8 L719,195.2 L718,195.0 L717,194.0 L716,194.6 L715,195.0 L714,193.8 L713,193.9 L712,194.0 L711,195.1 L710,194.4 L709,195.6 L708,194.4 L707,193.7 L706,194.5 L705,194.0 L704,194.0 L703,194.1 L702,194.3 L701,196.7 L700,194.1 L699,195.4 L698,194.0 L697,194.2 L696,194.2 L695,194.1 L694,194.2 L693,194.6 L692,194.2 L691,194.3 L690,194.2 L689,194.1 L688,194.2 L687,194.0 L686,195.6 L685,193.7 L684,195.3 L683,195.7 L682,193.8 L681,195.7 L680,194.4 L679,195.8 L678,194.3 L677,196.9 L676,194.0 L675,194.7 L674,194.2 L673,194.5 L672,194.4 L671,194.6 L670,194.4 L669,193.9 L668,193.8 L667,195.3 L666,194.5 L665,193.9 L664,194.0 L663,196.1 L662,194.3 L661,195.4 L660,193.8 L659,195.3 L658,193.8 L657,195.7 L656,196.7 L655,194.5 L654,194.7 L653,193.9 L652,193.7 L651,195.0 L650,194.0 L649,197.0 L648,193.9 L647,193.7 L646,194.0 L645,194.1 L644,193.8 L643,194.5 L642,194.1 L641,194.4 L640,195.8 L639,193.9 L638,194.5 L637,193.8 L636,193.9 L635,194.7 L634,194.3 L633,194.2 L632,193.7 L631,194.3 L630,193.9 L629,194.3 L628,195.1 L627,195.2 L626,193.9 L625,195.2 L624,194.8 L623,194.3 L622,195.1 L621,194.1 L620,194.0 L619,194.2 L618,195.6 L617,195.4 L616,194.8 L615,196.4 L614,195.4 L613,196.3 L612,194.9 L611,195.2 L610,194.1 L609,193.9 L608,194.0 L607,193.7 L606,194.1 L605,193.7 L604,195.7 L603,194.5 L602,194.0 L601,193.9 L600,195.1 L599,193.8 L598,194.3 L597,193.7 L596,195.0 L595,194.4 L594,194.8 L593,194.7 L592,193.8 L591,194.1 L590,193.7 L589,194.4 L588,193.9 L587,193.9 L586,193.8 L585,194.1 L584,194.4 L583,194.1 L582,195.5 L581,194.2 L580,194.0 L579,193.9 L578,194.4 L577,194.3 L576,194.0 L575,193.7 L574,197.2 L573,193.8 L572,194.0 L571,194.9 L570,193.9 L569,194.1 L568,194.3 L567,194.0 L566,194.5 L565,194.2 L564,195.6 L563,193.8 L562,194.0 L561,195.4 L560,194.6 L559,194.2 L558,194.8 L557,194.8 L556,194.6 L555,194.9 L554,194.3 L553,193.9 L552,194.8 L551,194.3 L550,194.3 L549,194.6 L548,195.6 L547,194.6 L546,195.4 L545,193.8 L544,194.2 L543,194.2 L542,196.9 L541,195.6 L540,193.7 L539,195.0 L538,195.4 L537,194.4 L536,194.3 L535,195.2 L534,195.4 L533,194.1 L532,195.3 L531,193.9 L530,195.4 L529,194.2 L528,193.9 L527,197.2 L526,194.6 L525,193.9 L524,193.8 L523,194.2 L522,196.6 L521,194.3 L520,195.3 L519,193.8 L518,196.2 L517,194.8 L516,194.2 L515,193.7 L514,193.9 L513,193.8 L512,194.5 L511,194.0 L510,194.2 L509,193.7 L508,193.8 L507,194.0 L506,193.8 L505,193.8 L504,195.4 L503,195.6 L502,195.0 L501,194.4 L500,194.0 L499,194.2 L498,193.9 L497,190.5 L496,191.3 L495,191.5 L494,191.4 L493,190.1 L492,190.4 L491,189.9 L490,190.3 L489,191.5 L488,191.3 L487,190.8 L486,190.7 L485,192.3 L484,191.0 L483,189.8 L482,190.4 L481,191.8 L480,191.6 L479,190.3 L478,190.4 L477,190.5 L476,190.0 L475,190.9 L474,191.0 L473,190.0 L472,190.0 L471,191.8 L470,190.5 L469,189.9 L468,189.9 L467,189.8 L466,190.1 L465,190.3 Z" fill="#2e7a5e"/><path d="M465,182.1 L466,181.5 L467,181.9 L468,181.8 L469,181.3 L470,181.1 L471,181.6 L472,182.1 L473,181.3 L474,181.6 L475,182.3 L476,181.5 L477,181.5 L478,182.2 L479,182.0 L480,181.1 L481,181.4 L482,181.1 L483,181.8 L484,181.8 L485,182.3 L486,182.4 L487,181.3 L488,181.1 L489,182.1 L490,181.8 L491,181.7 L492,181.5 L493,182.2 L494,182.5 L495,182.1 L496,181.0 L497,182.0 L498,178.1 L499,177.1 L500,177.5 L501,177.0 L502,177.3 L503,177.2 L504,177.4 L505,178.1 L506,177.6 L507,177.1 L508,178.6 L509,177.1 L510,178.4 L511,178.5 L512,177.6 L513,177.4 L514,177.7 L515,177.3 L516,177.2 L517,177.2 L518,177.1 L519,178.3 L520,178.5 L521,177.3 L522,177.3 L523,178.1 L524,178.4 L525,178.3 L526,177.9 L527,178.2 L528,177.5 L529,178.1 L530,177.8 L531,177.6 L532,177.9 L533,177.4 L534,177.5 L535,178.3 L536,178.5 L537,178.3 L538,178.3 L539,177.0 L540,177.8 L541,177.3 L542,177.8 L543,177.3 L544,177.1 L545,178.3 L546,177.8 L547,177.6 L548,177.3 L549,177.3 L550,178.0 L551,178.0 L552,178.5 L553,178.6 L554,178.2 L555,177.8 L556,177.2 L557,177.9 L558,177.4 L559,177.6 L560,178.1 L561,177.3 L562,177.4 L563,177.9 L564,177.7 L565,177.9 L566,178.2 L567,178.1 L568,177.3 L569,178.4 L570,178.1 L571,178.3 L572,178.3 L573,177.4 L574,177.1 L575,178.0 L576,177.3 L577,177.9 L578,177.6 L579,178.3 L580,178.5 L581,177.3 L582,177.8 L583,177.9 L584,177.6 L585,177.4 L586,177.9 L587,177.4 L588,178.2 L589,177.2 L590,177.5 L591,177.5 L592,177.9 L593,177.6 L594,177.9 L595,177.5 L596,178.2 L597,177.9 L598,177.9 L599,177.1 L600,177.6 L601,178.0 L602,177.0 L603,177.7 L604,177.3 L605,177.8 L606,177.7 L607,177.5 L608,177.6 L609,177.8 L610,177.1 L611,177.5 L612,177.4 L613,177.0 L614,178.5 L615,178.0 L616,177.9 L617,177.5 L618,178.2 L619,177.4 L620,177.8 L621,177.3 L622,178.3 L623,177.4 L624,177.6 L625,177.7 L626,177.1 L627,177.6 L628,177.3 L629,178.1 L630,178.4 L631,178.0 L632,178.2 L633,178.2 L634,178.3 L635,177.4 L636,178.2 L637,177.8 L638,177.6 L639,178.0 L640,177.2 L641,177.3 L642,177.3 L643,177.3 L644,178.6 L645,177.1 L646,178.2 L647,178.4 L648,177.4 L649,178.4 L650,177.3 L651,177.2 L652,177.3 L653,177.2 L654,177.3 L655,177.5 L656,177.4 L657,177.2 L658,178.2 L659,178.4 L660,178.5 L661,178.4 L662,177.8 L663,177.2 L664,177.3 L665,177.7 L666,177.3 L667,177.9 L668,178.5 L669,177.6 L670,177.6 L671,177.1 L672,177.0 L673,177.8 L674,178.5 L675,177.6 L676,177.2 L677,177.8 L678,177.4 L679,177.9 L680,177.7 L681,178.1 L682,178.0 L683,178.2 L684,177.0 L685,177.3 L686,178.1 L687,177.7 L688,177.3 L689,177.4 L690,177.7 L691,178.1 L692,178.3 L693,177.6 L694,177.3 L695,177.6 L696,177.6 L697,177.6 L698,178.3 L699,177.9 L700,178.4 L701,178.5 L702,177.1 L703,178.0 L704,177.3 L705,178.2 L706,177.9 L707,177.9 L708,177.1 L709,177.7 L710,178.4 L711,177.7 L712,177.9 L713,178.0 L714,177.1 L715,177.8 L716,178.4 L717,178.3 L718,178.6 L719,177.5 L720,177.1 L721,177.2 L722,178.6 L723,178.2 L724,178.3 L725,177.4 L726,177.2 L727,178.5 L728,177.5 L729,177.1 L730,177.1 L731,178.6 L732,177.6 L733,178.5 L734,177.4 L735,177.2 L736,178.5 L737,177.7 L738,177.5 L739,177.3 L740,177.6 L741,177.9 L742,177.3 L743,177.3 L744,178.1 L745,177.0 L746,177.3 L747,177.6 L748,177.3 L749,178.1 L750,177.2 L751,177.5 L752,177.2 L753,178.1 L754,178.2 L755,177.7 L756,177.2 L757,177.3 L758,177.2 L759,178.2 L760,177.3 L761,177.1 L762,178.5 L763,177.3 L764,177.4 L765,178.2 L766,177.5 L767,178.3 L768,177.4 L769,177.9 L770,177.3 L771,178.2 L772,177.2 L773,177.8 L774,177.7 L775,178.3 L776,177.5 L777,177.7 L778,177.8 L779,178.5 L780,178.0 L781,177.6 L782,178.4 L783,178.0 L784,178.6 L785,177.0 L786,177.8 L787,178.2 L788,177.9 L789,177.4 L790,177.1 L791,178.5 L792,178.3 L793,178.5 L794,177.2 L795,177.1 L796,178.5 L797,178.0 L798,177.1 L799,177.7 L800,177.1 L801,178.0 L802,178.3 L803,177.0 L804,178.5 L805,178.0 L806,177.2 L807,178.5 L808,177.5 L809,177.0 L810,178.4 L811,177.1 L812,178.1 L813,177.4 L814,178.1 L815,178.4 L816,178.3 L817,178.4 L818,178.6 L819,178.3 L820,177.1 L821,177.1 L822,177.2 L823,177.9 L824,177.1 L825,177.6 L826,178.1 L827,177.8 L828,178.4 L829,178.5 L829,193.5 L828,192.8 L827,193.4 L826,193.7 L825,193.1 L824,193.7 L823,192.6 L822,192.6 L821,193.8 L820,192.8 L819,192.5 L818,193.5 L817,193.5 L816,192.8 L815,193.2 L814,192.8 L813,192.6 L812,193.3 L811,193.5 L810,193.6 L809,192.5 L808,193.4 L807,193.7 L806,193.7 L805,193.8 L804,192.8 L803,192.8 L802,193.9 L801,193.1 L800,193.5 L799,193.4 L798,192.8 L797,192.6 L796,193.4 L795,193.9 L794,193.1 L793,193.3 L792,192.5 L791,192.7 L790,192.8 L789,193.7 L788,193.9 L787,193.6 L786,193.3 L785,193.8 L784,192.5 L783,193.2 L782,193.4 L781,193.7 L780,192.6 L779,194.0 L778,192.6 L777,193.0 L776,193.0 L775,192.7 L774,192.7 L773,193.2 L772,193.8 L771,193.3 L770,193.6 L769,192.5 L768,193.7 L767,192.8 L766,193.1 L765,193.4 L764,193.9 L763,192.7 L762,193.3 L761,193.0 L760,193.5 L759,193.8 L758,193.3 L757,193.7 L756,192.5 L755,193.7 L754,193.1 L753,192.4 L752,193.7 L751,193.4 L750,193.0 L749,193.1 L748,193.4 L747,194.0 L746,192.9 L745,193.5 L744,192.5 L743,193.3 L742,193.9 L741,193.0 L740,193.4 L739,193.0 L738,192.6 L737,193.1 L736,193.0 L735,193.2 L734,192.7 L733,192.9 L732,193.7 L731,192.4 L730,193.5 L729,192.8 L728,193.1 L727,193.4 L726,193.6 L725,193.5 L724,192.5 L723,193.6 L722,193.6 L721,192.6 L720,192.5 L719,192.6 L718,192.4 L717,192.6 L716,193.4 L715,193.1 L714,194.0 L713,193.3 L712,192.4 L711,193.9 L710,193.7 L709,192.5 L708,192.5 L707,193.4 L706,192.9 L705,192.9 L704,193.3 L703,193.7 L702,193.4 L701,193.6 L700,192.7 L699,193.6 L698,193.5 L697,193.5 L696,193.5 L695,193.4 L694,193.9 L693,193.5 L692,193.9 L691,192.4 L690,192.5 L689,193.8 L688,192.5 L687,193.4 L686,192.9 L685,192.9 L684,193.4 L683,193.2 L682,193.2 L681,193.7 L680,193.7 L679,193.1 L678,192.7 L677,193.2 L676,193.0 L675,192.9 L674,193.5 L673,193.8 L672,193.2 L671,192.9 L670,193.5 L669,192.4 L668,193.4 L667,193.9 L666,193.0 L665,193.5 L664,193.1 L663,192.4 L662,193.3 L661,193.2 L660,193.1 L659,193.2 L658,192.8 L657,193.3 L656,193.1 L655,193.2 L654,192.7 L653,193.7 L652,193.5 L651,193.4 L650,192.7 L649,193.8 L648,193.0 L647,192.8 L646,192.6 L645,193.4 L644,192.4 L643,193.4 L642,192.6 L641,193.8 L640,192.5 L639,193.9 L638,193.5 L637,193.1 L636,192.9 L635,192.8 L634,192.4 L633,193.1 L632,193.0 L631,193.8 L630,193.7 L629,193.3 L628,193.1 L627,193.7 L626,193.0 L625,192.8 L624,193.2 L623,193.7 L622,192.6 L621,193.0 L620,192.8 L619,193.9 L618,192.8 L617,193.0 L616,193.1 L615,192.4 L614,192.8 L613,193.0 L612,192.6 L611,193.0 L610,192.7 L609,193.1 L608,193.7 L607,193.2 L606,193.3 L605,192.6 L604,193.9 L603,192.7 L602,192.5 L601,193.2 L600,193.6 L599,192.7 L598,193.5 L597,193.4 L596,193.1 L595,193.4 L594,193.7 L593,192.6 L592,192.9 L591,193.4 L590,193.8 L589,193.6 L588,193.6 L587,193.1 L586,193.3 L585,193.9 L584,193.0 L583,192.6 L582,193.4 L581,193.5 L580,193.0 L579,193.0 L578,192.6 L577,192.7 L576,193.6 L575,194.0 L574,192.6 L573,192.6 L572,194.0 L571,192.9 L570,193.2 L569,192.8 L568,192.6 L567,193.5 L566,192.7 L565,193.8 L564,192.6 L563,193.6 L562,192.7 L561,193.5 L560,192.6 L559,193.0 L558,193.6 L557,193.3 L556,192.8 L555,193.0 L554,193.8 L553,192.7 L552,193.8 L551,193.8 L550,193.0 L549,193.4 L548,193.5 L547,192.5 L546,192.6 L545,193.5 L544,192.9 L543,192.8 L542,193.0 L541,192.7 L540,193.2 L539,192.4 L538,193.6 L537,192.4 L536,193.7 L535,193.8 L534,193.3 L533,193.0 L532,193.1 L531,192.4 L530,193.8 L529,193.9 L528,193.0 L527,192.9 L526,192.4 L525,192.9 L524,193.6 L523,192.6 L522,193.4 L521,193.4 L520,193.8 L519,192.6 L518,192.6 L517,193.9 L516,192.5 L515,193.7 L514,193.0 L513,192.5 L512,193.5 L511,193.5 L510,192.4 L509,193.0 L508,192.6 L507,192.6 L506,192.5 L505,192.7 L504,193.3 L503,193.1 L502,193.5 L501,193.2 L500,193.5 L499,193.4 L498,192.8 L497,189.9 L496,189.7 L495,189.7 L494,188.9 L493,189.9 L492,190.0 L491,188.9 L490,189.8 L489,189.4 L488,189.6 L487,189.6 L486,189.0 L485,188.9 L484,188.9 L483,189.7 L482,189.7 L481,188.5 L480,189.8 L479,188.6 L478,189.0 L477,189.8 L476,189.3 L475,188.8 L474,190.0 L473,188.5 L472,188.6 L471,189.1 L470,188.6 L469,188.9 L468,190.0 L467,189.5 L466,189.4 L465,188.5 Z" fill="#4fc79a"/><path d="M465,231.2 L466,231.2 L467,230.8 L468,231.1 L469,231.1 L470,230.8 L471,231.1 L472,231.3 L473,227.9 L474,231.3 L475,230.9 L476,231.4 L477,231.4 L478,230.4 L479,230.8 L480,231.2 L481,230.0 L482,231.4 L483,231.3 L484,230.0 L485,231.1 L486,230.7 L487,230.9 L488,229.7 L489,230.8 L490,230.5 L491,230.7 L492,231.0 L493,230.6 L494,230.9 L495,230.3 L496,230.9 L497,228.0 L498,226.6 L499,226.9 L500,227.6 L501,227.6 L502,227.3 L503,226.5 L504,227.5 L505,227.6 L506,227.3 L507,227.4 L508,225.9 L509,226.1 L510,225.7 L511,227.0 L512,227.0 L513,227.5 L514,226.9 L515,224.7 L516,227.3 L517,226.8 L518,226.9 L519,227.4 L520,227.6 L521,225.8 L522,225.9 L523,227.2 L524,227.1 L525,225.4 L526,226.8 L527,227.5 L528,227.2 L529,227.1 L530,227.4 L531,227.5 L532,227.5 L533,226.0 L534,226.3 L535,226.7 L536,226.7 L537,227.5 L538,227.2 L539,227.0 L540,226.7 L541,226.6 L542,227.6 L543,227.7 L544,227.1 L545,227.0 L546,227.4 L547,226.4 L548,226.6 L549,226.1 L550,226.2 L551,227.0 L552,226.5 L553,225.6 L554,225.9 L555,227.3 L556,227.1 L557,226.9 L558,225.9 L559,227.6 L560,227.3 L561,227.0 L562,226.0 L563,227.4 L564,227.7 L565,227.0 L566,225.6 L567,226.3 L568,227.2 L569,225.2 L570,227.4 L571,226.5 L572,225.9 L573,225.6 L574,226.0 L575,226.9 L576,227.5 L577,226.0 L578,226.2 L579,227.3 L580,227.6 L581,227.0 L582,227.6 L583,227.1 L584,227.5 L585,226.3 L586,227.3 L587,226.6 L588,226.8 L589,227.1 L590,227.6 L591,226.4 L592,227.7 L593,227.1 L594,227.5 L595,225.6 L596,227.4 L597,225.6 L598,227.2 L599,227.0 L600,227.0 L601,227.2 L602,227.0 L603,227.1 L604,227.0 L605,227.2 L606,227.6 L607,227.3 L608,226.9 L609,227.6 L610,227.5 L611,227.5 L612,227.0 L613,227.5 L614,227.4 L615,226.0 L616,227.1 L617,226.9 L618,227.2 L619,227.1 L620,225.6 L621,227.2 L622,227.3 L623,227.1 L624,227.2 L625,227.4 L626,227.0 L627,227.5 L628,227.3 L629,227.5 L630,227.1 L631,227.0 L632,224.6 L633,227.7 L634,227.0 L635,226.2 L636,227.0 L637,227.6 L638,226.2 L639,227.6 L640,227.4 L641,227.2 L642,226.5 L643,227.4 L644,227.7 L645,227.1 L646,225.5 L647,227.6 L648,227.0 L649,227.2 L650,226.0 L651,227.0 L652,225.2 L653,226.4 L654,227.2 L655,225.8 L656,227.6 L657,227.2 L658,225.4 L659,227.7 L660,227.5 L661,227.1 L662,227.5 L663,227.0 L664,227.0 L665,227.0 L666,226.1 L667,226.5 L668,226.0 L669,227.4 L670,227.5 L671,226.8 L672,227.3 L673,227.6 L674,225.0 L675,225.7 L676,227.3 L677,227.3 L678,225.4 L679,225.3 L680,227.6 L681,226.0 L682,227.2 L683,227.1 L684,226.2 L685,227.1 L686,227.3 L687,227.2 L688,226.4 L689,225.8 L690,227.3 L691,227.2 L692,227.4 L693,227.4 L694,227.6 L695,227.0 L696,226.8 L697,226.6 L698,227.4 L699,225.8 L700,227.4 L701,227.5 L702,227.3 L703,224.5 L704,225.4 L705,227.2 L706,227.3 L707,227.2 L708,227.0 L709,227.2 L710,227.2 L711,226.8 L712,226.9 L713,227.0 L714,227.0 L715,227.3 L716,227.3 L717,227.5 L718,227.5 L719,227.4 L720,226.2 L721,226.9 L722,227.1 L723,227.0 L724,227.4 L725,227.5 L726,227.2 L727,227.1 L728,225.4 L729,225.8 L730,227.1 L731,226.3 L732,227.4 L733,225.1 L734,227.5 L735,227.5 L736,227.2 L737,227.0 L738,227.7 L739,227.3 L740,227.2 L741,227.0 L742,226.0 L743,227.4 L744,225.9 L745,227.6 L746,226.9 L747,227.0 L748,225.5 L749,227.5 L750,227.6 L751,227.3 L752,227.4 L753,227.0 L754,226.9 L755,227.2 L756,227.3 L757,226.6 L758,227.6 L759,225.9 L760,226.4 L761,227.1 L762,225.2 L763,226.2 L764,227.0 L765,227.7 L766,226.9 L767,227.5 L768,227.6 L769,226.1 L770,227.1 L771,227.5 L772,226.6 L773,227.0 L774,227.6 L775,226.4 L776,227.0 L777,227.0 L778,227.7 L779,227.2 L780,227.5 L781,225.3 L782,225.7 L783,227.1 L784,227.6 L785,225.9 L786,226.9 L787,226.4 L788,227.0 L789,227.7 L790,227.3 L791,227.3 L792,225.6 L793,227.2 L794,227.6 L795,227.1 L796,226.8 L797,226.5 L798,227.0 L799,227.1 L800,227.1 L801,226.1 L802,225.7 L803,227.3 L804,226.9 L805,227.1 L806,227.6 L807,226.5 L808,226.4 L809,227.1 L810,227.7 L811,226.9 L812,227.0 L813,227.4 L814,227.1 L815,226.9 L816,227.3 L817,224.3 L818,227.5 L819,227.5 L820,226.4 L821,226.9 L822,227.0 L823,227.1 L824,227.4 L825,227.1 L826,226.8 L827,226.9 L828,227.1 L829,227.0 L829,244.1 L828,244.0 L827,246.5 L826,244.5 L825,245.8 L824,243.7 L823,243.9 L822,244.0 L821,245.4 L820,243.9 L819,243.5 L818,243.5 L817,245.6 L816,243.6 L815,245.1 L814,243.4 L813,244.0 L812,245.0 L811,243.7 L810,243.9 L809,244.0 L808,243.8 L807,243.7 L806,243.3 L805,243.4 L804,245.4 L803,243.8 L802,243.6 L801,244.3 L800,244.9 L799,243.9 L798,244.8 L797,244.7 L796,244.4 L795,243.4 L794,243.4 L793,243.9 L792,246.9 L791,243.3 L790,243.8 L789,243.8 L788,243.4 L787,244.1 L786,244.5 L785,244.6 L784,243.4 L783,244.0 L782,244.6 L781,244.0 L780,243.8 L779,243.5 L778,243.4 L777,243.5 L776,243.4 L775,246.1 L774,243.8 L773,243.8 L772,245.2 L771,243.5 L770,243.7 L769,244.9 L768,243.3 L767,243.5 L766,243.7 L765,243.6 L764,244.4 L763,244.4 L762,244.4 L761,244.0 L760,244.1 L759,244.9 L758,245.3 L757,245.3 L756,243.5 L755,243.5 L754,243.3 L753,243.3 L752,243.3 L751,243.8 L750,243.7 L749,244.0 L748,243.6 L747,243.6 L746,244.3 L745,243.9 L744,245.0 L743,243.4 L742,245.3 L741,243.7 L740,243.6 L739,244.5 L738,243.4 L737,243.8 L736,243.7 L735,245.2 L734,244.4 L733,243.5 L732,243.9 L731,245.0 L730,243.6 L729,245.1 L728,246.5 L727,243.6 L726,243.5 L725,243.6 L724,244.9 L723,243.7 L722,243.6 L721,243.9 L720,244.9 L719,244.0 L718,244.1 L717,244.4 L716,243.5 L715,243.5 L714,243.5 L713,243.7 L712,243.5 L711,244.4 L710,243.6 L709,243.6 L708,243.3 L707,243.5 L706,244.0 L705,243.8 L704,246.3 L703,246.8 L702,244.1 L701,243.4 L700,243.7 L699,243.6 L698,243.8 L697,244.2 L696,243.9 L695,244.0 L694,243.9 L693,243.4 L692,244.2 L691,243.4 L690,243.4 L689,245.3 L688,245.0 L687,243.4 L686,243.6 L685,243.5 L684,244.0 L683,246.2 L682,244.0 L681,243.9 L680,243.3 L679,244.2 L678,245.6 L677,243.3 L676,243.6 L675,244.5 L674,243.6 L673,243.3 L672,243.6 L671,243.5 L670,243.5 L669,243.5 L668,243.5 L667,244.3 L666,243.7 L665,245.0 L664,243.4 L663,243.6 L662,243.7 L661,243.8 L660,243.5 L659,243.6 L658,245.3 L657,244.4 L656,244.8 L655,243.6 L654,243.6 L653,244.2 L652,246.0 L651,243.6 L650,243.9 L649,243.6 L648,243.9 L647,243.9 L646,243.5 L645,243.4 L644,244.0 L643,243.8 L642,244.8 L641,243.4 L640,243.3 L639,243.5 L638,243.4 L637,244.0 L636,244.6 L635,243.8 L634,244.2 L633,243.8 L632,243.8 L631,243.9 L630,243.5 L629,243.5 L628,243.5 L627,244.5 L626,243.6 L625,243.4 L624,243.7 L623,244.9 L622,245.2 L621,243.5 L620,244.6 L619,243.5 L618,244.2 L617,246.8 L616,243.6 L615,243.6 L614,244.2 L613,243.9 L612,243.6 L611,243.3 L610,243.4 L609,243.9 L608,244.1 L607,243.4 L606,244.1 L605,243.7 L604,243.7 L603,243.5 L602,243.5 L601,244.0 L600,243.9 L599,244.0 L598,243.5 L597,246.8 L596,243.3 L595,244.6 L594,243.4 L593,243.6 L592,243.9 L591,245.0 L590,243.7 L589,243.4 L588,243.6 L587,245.4 L586,243.5 L585,243.7 L584,244.0 L583,244.7 L582,244.2 L581,245.4 L580,243.8 L579,243.7 L578,243.9 L577,245.4 L576,245.2 L575,243.9 L574,243.7 L573,244.0 L572,244.9 L571,245.1 L570,243.6 L569,245.2 L568,243.6 L567,244.1 L566,244.4 L565,243.9 L564,243.7 L563,244.0 L562,245.3 L561,243.6 L560,243.8 L559,243.5 L558,244.3 L557,244.0 L556,244.1 L555,243.7 L554,244.6 L553,244.8 L552,244.3 L551,243.3 L550,245.2 L549,244.3 L548,244.8 L547,245.1 L546,243.6 L545,243.9 L544,243.4 L543,243.6 L542,244.0 L541,246.1 L540,243.9 L539,243.5 L538,243.3 L537,243.7 L536,243.9 L535,244.4 L534,243.7 L533,244.6 L532,243.4 L531,243.6 L530,243.6 L529,244.3 L528,244.0 L527,243.8 L526,245.3 L525,244.2 L524,244.4 L523,243.5 L522,245.1 L521,244.6 L520,244.1 L519,243.7 L518,244.4 L517,244.8 L516,244.0 L515,246.4 L514,243.9 L513,243.6 L512,243.9 L511,243.7 L510,244.1 L509,243.6 L508,243.6 L507,243.4 L506,243.5 L505,243.6 L504,245.1 L503,244.4 L502,243.3 L501,243.5 L500,243.5 L499,243.5 L498,244.4 L497,241.3 L496,239.5 L495,242.1 L494,240.1 L493,240.6 L492,239.5 L491,239.8 L490,240.2 L489,239.9 L488,240.5 L487,239.8 L486,241.0 L485,239.6 L484,241.2 L483,239.7 L482,240.0 L481,239.9 L480,239.9 L479,239.7 L478,239.9 L477,239.5 L476,242.4 L475,239.7 L474,240.2 L473,242.9 L472,239.8 L471,239.7 L470,240.0 L469,243.1 L468,239.7 L467,239.8 L466,239.6 L465,241.3 Z" fill="#2e7a5e"/><path d="M465,232.3 L466,232.6 L467,232.8 L468,232.6 L469,232.6 L470,231.7 L471,232.3 L472,231.7 L473,231.2 L474,232.4 L475,231.7 L476,232.0 L477,232.1 L478,232.8 L479,232.3 L480,232.6 L481,232.6 L482,232.5 L483,232.6 L484,232.0 L485,232.2 L486,231.3 L487,232.5 L488,231.4 L489,232.4 L490,232.4 L491,232.7 L492,232.1 L493,232.2 L494,231.7 L495,231.9 L496,231.7 L497,231.4 L498,228.4 L499,228.3 L500,228.4 L501,228.3 L502,227.4 L503,228.0 L504,228.6 L505,228.4 L506,228.7 L507,227.7 L508,227.5 L509,227.9 L510,228.0 L511,228.5 L512,229.0 L513,227.6 L514,228.1 L515,228.6 L516,227.8 L517,227.9 L518,228.2 L519,227.9 L520,228.0 L521,228.6 L522,228.6 L523,228.2 L524,228.2 L525,228.6 L526,227.5 L527,228.2 L528,227.7 L529,228.7 L530,228.3 L531,227.7 L532,227.6 L533,228.4 L534,227.7 L535,228.8 L536,228.8 L537,227.7 L538,228.3 L539,228.4 L540,227.9 L541,228.2 L542,227.8 L543,227.9 L544,228.2 L545,228.4 L546,228.4 L547,228.7 L548,228.9 L549,227.9 L550,228.5 L551,227.7 L552,228.0 L553,228.7 L554,227.7 L555,228.4 L556,228.3 L557,227.9 L558,228.3 L559,227.7 L560,228.4 L561,227.5 L562,227.4 L563,228.4 L564,228.5 L565,227.8 L566,228.2 L567,227.6 L568,229.0 L569,228.3 L570,227.7 L571,228.2 L572,228.3 L573,228.2 L574,227.9 L575,228.4 L576,227.9 L577,227.8 L578,228.8 L579,228.9 L580,228.8 L581,227.8 L582,228.9 L583,227.9 L584,228.9 L585,228.3 L586,227.4 L587,227.6 L588,228.5 L589,229.0 L590,228.6 L591,228.5 L592,227.6 L593,228.2 L594,228.9 L595,227.6 L596,227.6 L597,228.7 L598,228.1 L599,228.3 L600,228.1 L601,227.7 L602,227.5 L603,228.9 L604,228.1 L605,228.1 L606,228.6 L607,228.5 L608,227.7 L609,228.3 L610,228.3 L611,228.9 L612,228.0 L613,227.6 L614,228.0 L615,227.5 L616,227.7 L617,227.9 L618,228.5 L619,227.7 L620,227.5 L621,228.8 L622,227.7 L623,228.3 L624,228.6 L625,227.9 L626,228.9 L627,228.9 L628,228.5 L629,228.1 L630,228.1 L631,227.5 L632,227.7 L633,227.7 L634,228.4 L635,228.4 L636,228.6 L637,228.9 L638,227.8 L639,227.9 L640,227.7 L641,227.5 L642,227.5 L643,228.5 L644,227.8 L645,227.5 L646,228.2 L647,228.0 L648,228.9 L649,228.6 L650,227.6 L651,227.5 L652,228.0 L653,228.4 L654,227.9 L655,228.5 L656,228.6 L657,228.7 L658,228.5 L659,228.1 L660,228.1 L661,228.0 L662,228.9 L663,228.8 L664,228.8 L665,228.4 L666,227.9 L667,228.7 L668,228.5 L669,227.6 L670,228.8 L671,227.6 L672,228.2 L673,228.8 L674,228.7 L675,228.2 L676,228.7 L677,228.7 L678,228.6 L679,228.2 L680,229.0 L681,228.2 L682,228.1 L683,228.6 L684,228.8 L685,229.0 L686,228.2 L687,227.6 L688,228.1 L689,228.0 L690,227.9 L691,228.6 L692,227.4 L693,228.0 L694,227.7 L695,227.7 L696,227.5 L697,227.5 L698,228.3 L699,228.6 L700,227.9 L701,228.4 L702,228.7 L703,228.5 L704,227.4 L705,228.2 L706,227.8 L707,227.8 L708,228.7 L709,227.6 L710,228.9 L711,228.4 L712,227.5 L713,227.8 L714,227.7 L715,227.6 L716,227.7 L717,228.1 L718,227.7 L719,227.6 L720,227.5 L721,227.5 L722,227.5 L723,228.6 L724,228.6 L725,228.3 L726,228.2 L727,227.9 L728,228.4 L729,227.7 L730,227.5 L731,228.4 L732,228.0 L733,228.5 L734,227.7 L735,229.0 L736,229.0 L737,227.7 L738,228.0 L739,228.5 L740,228.4 L741,228.0 L742,228.9 L743,227.9 L744,227.9 L745,228.8 L746,228.9 L747,228.7 L748,227.5 L749,228.6 L750,228.0 L751,228.4 L752,227.5 L753,227.4 L754,227.7 L755,228.2 L756,228.7 L757,228.3 L758,228.6 L759,228.8 L760,227.6 L761,228.4 L762,227.6 L763,228.9 L764,228.3 L765,228.4 L766,228.0 L767,228.2 L768,227.5 L769,228.4 L770,228.9 L771,227.9 L772,228.3 L773,227.6 L774,227.8 L775,228.5 L776,227.5 L777,228.8 L778,228.1 L779,228.4 L780,228.0 L781,227.8 L782,228.1 L783,227.4 L784,227.7 L785,228.4 L786,227.9 L787,228.6 L788,228.1 L789,227.7 L790,228.8 L791,227.6 L792,227.8 L793,228.5 L794,228.5 L795,227.5 L796,228.7 L797,227.5 L798,228.5 L799,228.8 L800,228.4 L801,227.5 L802,228.7 L803,228.3 L804,228.0 L805,228.5 L806,227.8 L807,228.1 L808,227.8 L809,228.4 L810,228.2 L811,228.0 L812,227.8 L813,227.7 L814,228.4 L815,228.6 L816,228.9 L817,227.8 L818,228.3 L819,228.8 L820,228.0 L821,228.0 L822,227.8 L823,227.5 L824,228.5 L825,227.7 L826,228.7 L827,228.1 L828,227.9 L829,228.8 L829,242.5 L828,243.4 L827,242.8 L826,243.4 L825,242.6 L824,242.6 L823,243.2 L822,242.6 L821,243.1 L820,243.5 L819,242.5 L818,243.3 L817,243.1 L816,242.9 L815,242.4 L814,243.5 L813,242.9 L812,242.1 L811,242.4 L810,242.5 L809,243.5 L808,242.4 L807,243.1 L806,242.8 L805,242.2 L804,243.2 L803,243.3 L802,243.5 L801,242.4 L800,242.6 L799,242.4 L798,242.7 L797,242.3 L796,242.5 L795,243.5 L794,242.6 L793,242.1 L792,242.3 L791,242.3 L790,242.8 L789,242.6 L788,243.3 L787,242.3 L786,243.1 L785,243.5 L784,243.1 L783,243.0 L782,242.7 L781,242.5 L780,242.4 L779,243.2 L778,242.1 L777,242.9 L776,243.4 L775,242.2 L774,242.1 L773,243.2 L772,243.2 L771,242.9 L770,243.3 L769,243.6 L768,242.8 L767,243.1 L766,242.6 L765,243.1 L764,243.5 L763,243.0 L762,243.1 L761,243.5 L760,242.8 L759,242.9 L758,242.6 L757,243.3 L756,243.5 L755,242.0 L754,242.3 L753,242.3 L752,242.8 L751,242.8 L750,243.4 L749,243.4 L748,242.6 L747,242.4 L746,243.3 L745,243.1 L744,243.3 L743,242.7 L742,242.4 L741,242.5 L740,243.4 L739,242.3 L738,242.7 L737,242.7 L736,242.2 L735,242.8 L734,243.3 L733,243.0 L732,243.3 L731,242.1 L730,243.3 L729,243.1 L728,243.3 L727,243.1 L726,243.5 L725,242.4 L724,242.3 L723,243.3 L722,243.3 L721,242.2 L720,242.9 L719,242.5 L718,243.3 L717,242.7 L716,243.3 L715,243.2 L714,243.5 L713,242.2 L712,243.1 L711,242.3 L710,243.1 L709,243.3 L708,243.0 L707,243.0 L706,243.5 L705,242.8 L704,243.3 L703,243.6 L702,242.4 L701,242.2 L700,242.2 L699,243.2 L698,242.1 L697,242.7 L696,242.0 L695,242.7 L694,242.5 L693,243.1 L692,242.1 L691,243.0 L690,242.1 L689,243.3 L688,242.4 L687,242.1 L686,242.5 L685,242.6 L684,242.4 L683,243.2 L682,243.1 L681,243.3 L680,243.5 L679,243.4 L678,243.4 L677,242.2 L676,242.6 L675,242.6 L674,242.9 L673,242.7 L672,242.9 L671,242.2 L670,242.2 L669,242.8 L668,243.3 L667,243.5 L666,242.3 L665,242.6 L664,242.9 L663,243.0 L662,242.8 L661,242.7 L660,243.3 L659,242.2 L658,242.1 L657,243.3 L656,243.2 L655,242.7 L654,242.1 L653,243.5 L652,243.5 L651,242.1 L650,242.4 L649,243.4 L648,242.2 L647,242.9 L646,243.4 L645,242.1 L644,242.8 L643,242.6 L642,242.8 L641,243.6 L640,242.2 L639,242.2 L638,242.7 L637,242.7 L636,242.9 L635,243.0 L634,242.1 L633,243.6 L632,242.2 L631,242.5 L630,242.2 L629,242.5 L628,242.4 L627,243.3 L626,243.1 L625,242.2 L624,243.4 L623,243.1 L622,243.5 L621,242.2 L620,242.3 L619,242.2 L618,242.3 L617,243.1 L616,242.8 L615,242.9 L614,242.3 L613,242.1 L612,242.1 L611,242.7 L610,243.4 L609,243.5 L608,242.9 L607,243.1 L606,243.3 L605,242.5 L604,242.7 L603,242.5 L602,242.9 L601,242.3 L600,242.6 L599,242.8 L598,242.6 L597,242.1 L596,242.4 L595,243.3 L594,242.5 L593,242.7 L592,242.9 L591,242.4 L590,242.4 L589,243.6 L588,242.8 L587,242.2 L586,243.3 L585,242.9 L584,243.1 L583,242.8 L582,243.1 L581,242.9 L580,242.1 L579,243.3 L578,242.4 L577,243.2 L576,242.9 L575,242.1 L574,243.2 L573,243.3 L572,242.8 L571,243.4 L570,242.7 L569,242.7 L568,242.9 L567,243.2 L566,242.8 L565,242.6 L564,242.1 L563,243.1 L562,243.1 L561,242.3 L560,242.9 L559,242.6 L558,243.0 L557,242.5 L556,242.6 L555,242.1 L554,243.0 L553,242.7 L552,243.4 L551,242.1 L550,242.4 L549,242.4 L548,242.3 L547,242.9 L546,242.0 L545,242.5 L544,242.4 L543,242.6 L542,242.2 L541,243.3 L540,242.7 L539,243.6 L538,242.1 L537,242.8 L536,242.6 L535,242.4 L534,242.2 L533,243.3 L532,242.1 L531,243.4 L530,243.0 L529,243.3 L528,242.4 L527,242.8 L526,242.8 L525,242.2 L524,242.8 L523,243.2 L522,243.5 L521,243.0 L520,242.9 L519,242.5 L518,243.0 L517,242.6 L516,242.6 L515,243.0 L514,243.6 L513,242.8 L512,243.2 L511,243.6 L510,242.9 L509,242.5 L508,242.1 L507,243.3 L506,242.2 L505,242.4 L504,243.0 L503,243.5 L502,242.0 L501,242.2 L500,242.6 L499,243.6 L498,242.5 L497,239.3 L496,239.8 L495,239.1 L494,239.2 L493,238.2 L492,239.1 L491,239.0 L490,238.3 L489,238.5 L488,239.4 L487,239.7 L486,238.8 L485,239.0 L484,238.4 L483,239.4 L482,239.3 L481,238.9 L480,239.0 L479,239.6 L478,239.8 L477,238.4 L476,238.6 L475,238.3 L474,239.5 L473,238.3 L472,239.6 L471,239.7 L470,238.3 L469,238.5 L468,239.4 L467,239.7 L466,239.8 L465,238.2 Z" fill="#4fc79a"/></svg>
<div class="a" style="left:462px;top:197px;width:367px;height:2px;background:#d6ccb4;"></div>
<div class="a" style="left:462px;top:210px;width:367px;height:2px;background:#6a696b;"></div>
<svg class="a" style="left:466px;top:242px" width="18" height="18"><circle cx="8.4" cy="8.2" r="7" stroke="#c8c8c8" stroke-width="1.3" fill="#141315"/><path d="M4.8 5.2 Q8 5 8.6 8.2 Q9.2 5 12.2 5.2" stroke="#c8c8c8" stroke-width="1.2" fill="none"/><circle cx="5.6" cy="10" r="1.4" fill="#d0d0d0"/><circle cx="11.4" cy="10" r="1.4" fill="#d0d0d0"/></svg>
<div class="a" style="left:0px;top:422px;width:258px;height:273px;background:#242325;"></div>
<div class="a" style="left:258px;top:422px;width:8px;height:273px;background:#2b2a2c;"></div>
<div class="a" style="left:259px;top:400px;width:6px;height:238px;background:#323133;border-radius:3px"></div>
<div class="a" style="left:266px;top:36px;width:6px;height:659px;background:#1a191b;"></div>
<div class="a" style="left:271px;top:36px;width:1px;height:659px;background:#4d6f9a;"></div>
<div class="a" style="left:272px;top:36px;width:6px;height:659px;background:#1e1d20;"></div>
<div class="t " style="left:22px;top:422px;color:#bdbdbd;font-weight:bold">信息</div>
<div class="t " style="left:22px;top:444px;color:#bdbdbd;font-weight:bold">基本设置</div>
<div class="t " style="left:22px;top:466px;color:#bdbdbd;font-weight:bold">伸缩</div>
<div class="t " style="left:22px;top:488px;color:#bdbdbd;font-weight:bold">重新混合</div>
<div class="chev" style="left:5px;top:425px;border-color:#bbb;width:5px;height:5px"></div>
<div class="chev" style="left:5px;top:447px;border-color:#bbb;width:5px;height:5px"></div>
<div class="chev" style="left:5px;top:469px;border-color:#bbb;width:5px;height:5px"></div>
<div class="chev" style="left:7px;top:490px;border-color:#bbb;width:5px;height:5px;transform:rotate(135deg)"></div>
<div class="a" style="left:0px;top:441px;width:258px;height:1px;background:#333234;"></div>
<div class="a" style="left:0px;top:462px;width:258px;height:1px;background:#333234;"></div>
<div class="a" style="left:0px;top:484px;width:258px;height:1px;background:#333234;"></div>
<div class="t " style="left:236px;top:466px;color:#8a8a8a;">关</div>
<div class="t " style="left:236px;top:488px;color:#8a8a8a;">开</div>
<div class="a" style="left:20px;top:514px;width:106px;height:15px;background:#19181a;"></div>
<div class="t" style="left:20px;width:106px;text-align:center;top:515px;color:#4e8fe0">禁用重新混合</div>
<svg class="a" style="left:139px;top:515px" width="14" height="14"><path d="M3 7a4 4 0 1 0 4-4H5" stroke="#ddd" stroke-width="1.6" fill="none"/><path d="M6 0.5L3 3l3 2.5z" fill="#ddd"/></svg>
<div class="t " style="left:20px;top:538px;color:#7f7f7f;">目标持续时间：</div>
<div class="a" style="left:106px;top:537px;width:45px;height:14px;background:#1c2434;"></div>
<div class="t " style="left:108px;top:538px;color:#4e8fe0;letter-spacing:-0.45px">12:38.698</div>
<div class="t " style="left:160px;top:538px;color:#9a9a9a;">（±5 秒）</div>
<div class="t " style="left:20px;top:562px;color:#7f7f7f;">重新混合持续时间：<span style="letter-spacing:-0.6px">13:07.866</span></div>
<div class="a" style="left:14px;top:583px;width:226px;height:1px;background:#353436;"></div>
<div class="chev" style="left:16px;top:593px;border-color:#bbb;width:5px;height:5px;transform:rotate(135deg)"></div>
<div class="t " style="left:31px;top:591px;color:#bdbdbd;font-weight:bold">高级</div>
<div class="a" style="left:15px;top:610px;width:11px;height:11px;background:transparent;border:1px solid #8a8a8a"></div>
<div class="t " style="left:30px;top:610px;color:#9a9a9a;">拉伸为确切的持续时间</div>
<div class="t " style="left:-217px;width:300px;text-align:right;top:639px;color:#9a9a9a;">编辑长度：</div>
<div class="t " style="left:88px;top:631px;font-size:8px;color:#8a8a8a;">短</div>
<div class="t" style="left:141px;width:20px;text-align:center;top:631px;font-size:8px;color:#8a8a8a">50</div>
<div class="t " style="left:-86px;width:300px;text-align:right;top:631px;font-size:8px;color:#8a8a8a;">长</div>
<div class="a" style="left:96px;top:647px;width:107px;height:1px;background:#6a6a6a;"></div>
<div class="a" style="left:96px;top:644px;width:1px;height:3px;background:#6a6a6a;"></div>
<div class="a" style="left:107px;top:644px;width:1px;height:3px;background:#6a6a6a;"></div>
<div class="a" style="left:117px;top:644px;width:1px;height:3px;background:#6a6a6a;"></div>
<div class="a" style="left:128px;top:644px;width:1px;height:3px;background:#6a6a6a;"></div>
<div class="a" style="left:139px;top:644px;width:1px;height:3px;background:#6a6a6a;"></div>
<div class="a" style="left:150px;top:644px;width:1px;height:3px;background:#6a6a6a;"></div>
<div class="a" style="left:160px;top:644px;width:1px;height:3px;background:#6a6a6a;"></div>
<div class="a" style="left:171px;top:644px;width:1px;height:3px;background:#6a6a6a;"></div>
<div class="a" style="left:182px;top:644px;width:1px;height:3px;background:#6a6a6a;"></div>
<div class="a" style="left:192px;top:644px;width:1px;height:3px;background:#6a6a6a;"></div>
<div class="a" style="left:203px;top:644px;width:1px;height:3px;background:#6a6a6a;"></div>
<div class="a" style="left:200px;top:642px;width:12px;height:12px;border-radius:50%;border:2px solid #c8c8c8;background:#242325"></div>
<div class="t " style="left:-65px;width:300px;text-align:right;top:639px;color:#4e8fe0;">100</div>
<div class="t " style="left:-217px;width:300px;text-align:right;top:664px;color:#9a9a9a;">特性：</div>
<div class="t " style="left:88px;top:656px;font-size:8px;color:#8a8a8a;">音色</div>
<div class="t" style="left:141px;width:20px;text-align:center;top:656px;font-size:8px;color:#8a8a8a">50</div>
<div class="t " style="left:-86px;width:300px;text-align:right;top:656px;font-size:8px;color:#8a8a8a;">谐波</div>
<div class="a" style="left:96px;top:672px;width:107px;height:1px;background:#6a6a6a;"></div>
<div class="a" style="left:96px;top:669px;width:1px;height:3px;background:#6a6a6a;"></div>
<div class="a" style="left:107px;top:669px;width:1px;height:3px;background:#6a6a6a;"></div>
<div class="a" style="left:117px;top:669px;width:1px;height:3px;background:#6a6a6a;"></div>
<div class="a" style="left:128px;top:669px;width:1px;height:3px;background:#6a6a6a;"></div>
<div class="a" style="left:139px;top:669px;width:1px;height:3px;background:#6a6a6a;"></div>
<div class="a" style="left:150px;top:669px;width:1px;height:3px;background:#6a6a6a;"></div>
<div class="a" style="left:160px;top:669px;width:1px;height:3px;background:#6a6a6a;"></div>
<div class="a" style="left:171px;top:669px;width:1px;height:3px;background:#6a6a6a;"></div>
<div class="a" style="left:182px;top:669px;width:1px;height:3px;background:#6a6a6a;"></div>
<div class="a" style="left:192px;top:669px;width:1px;height:3px;background:#6a6a6a;"></div>
<div class="a" style="left:203px;top:669px;width:1px;height:3px;background:#6a6a6a;"></div>
<div class="a" style="left:145px;top:667px;width:12px;height:12px;border-radius:50%;border:2px solid #c8c8c8;background:#242325"></div>
<div class="t " style="left:-65px;width:300px;text-align:right;top:664px;color:#4e8fe0;">50</div>
<div class="t " style="left:-217px;width:300px;text-align:right;top:686px;color:#9a9a9a;">最小循环：</div>
<div class="t " style="left:88px;top:678px;font-size:8px;color:#8a8a8a;"></div>
<div class="a" style="left:96px;top:694px;width:107px;height:1px;background:#6a6a6a;"></div>
<div class="a" style="left:96px;top:691px;width:1px;height:3px;background:#6a6a6a;"></div>
<div class="a" style="left:107px;top:691px;width:1px;height:3px;background:#6a6a6a;"></div>
<div class="a" style="left:117px;top:691px;width:1px;height:3px;background:#6a6a6a;"></div>
<div class="a" style="left:128px;top:691px;width:1px;height:3px;background:#6a6a6a;"></div>
<div class="a" style="left:139px;top:691px;width:1px;height:3px;background:#6a6a6a;"></div>
<div class="a" style="left:150px;top:691px;width:1px;height:3px;background:#6a6a6a;"></div>
<div class="a" style="left:160px;top:691px;width:1px;height:3px;background:#6a6a6a;"></div>
<div class="a" style="left:171px;top:691px;width:1px;height:3px;background:#6a6a6a;"></div>
<div class="a" style="left:182px;top:691px;width:1px;height:3px;background:#6a6a6a;"></div>
<div class="a" style="left:192px;top:691px;width:1px;height:3px;background:#6a6a6a;"></div>
<div class="a" style="left:203px;top:691px;width:1px;height:3px;background:#6a6a6a;"></div>
<div class="a" style="left:97px;top:689px;width:12px;height:12px;border-radius:50%;border:2px solid #c8c8c8;background:#242325"></div>
<div class="t " style="left:-65px;width:300px;text-align:right;top:686px;color:#4e8fe0;"></div>
<div class="a" style="left:206px;top:686px;width:8px;height:12px;background:#1a2a44;"></div>
<div class="t " style="left:207px;top:686px;color:#4e8fe0;">8</div>
<div class="t " style="left:215px;top:686px;color:#9a9a9a;">节拍</div>
<div class="a" style="left:0px;top:35px;width:283px;height:387px;background:#f0f0f0;border-left:1px solid #d6d6d6;border-top:1px solid #e2e2e2"></div>
<div class="a" style="left:2px;top:335px;width:281px;height:18px;background:#8dc3f5;"></div>
<div class="t k" style="left:29px;top:41px;color:#1b1b1b;">新建(N)</div>
<div class="chev" style="left:268px;top:44px"></div>
<div class="t k" style="left:29px;top:60px;color:#1b1b1b;">打开(O)...</div>
<div class="t k" style="left:-34px;width:300px;text-align:right;top:60px;color:#1b1b1b;letter-spacing:0.4px">Ctrl+O</div>
<div class="t k" style="left:29px;top:78px;color:#1b1b1b;">打开并附加</div>
<div class="chev" style="left:268px;top:81px"></div>
<div class="t k" style="left:29px;top:96px;color:#1b1b1b;">打开最近使用的文件(R)</div>
<div class="chev" style="left:268px;top:99px"></div>
<div class="t k" style="left:29px;top:120px;color:#1b1b1b;">从 CD 中提取音频(D)...</div>
<div class="t k" style="left:29px;top:144px;color:#1b1b1b;">关闭(C)</div>
<div class="t k" style="left:-34px;width:300px;text-align:right;top:144px;color:#1b1b1b;letter-spacing:0.4px">Ctrl+W</div>
<div class="t k" style="left:29px;top:162px;color:#1b1b1b;">全部关闭(L)</div>
<div class="t k" style="left:29px;top:180px;color:#1b1b1b;">关闭未使用媒体(U)</div>
<div class="t k" style="left:29px;top:199px;color:#1b1b1b;">关闭会话及其媒体(F)</div>
<div class="t k" style="left:29px;top:222px;color:#1b1b1b;">保存(S)</div>
<div class="t k" style="left:-34px;width:300px;text-align:right;top:222px;color:#1b1b1b;letter-spacing:0.4px">Ctrl+S</div>
<div class="t k" style="left:29px;top:241px;color:#1b1b1b;">另存为(A)...</div>
<div class="t k" style="left:-34px;width:300px;text-align:right;top:241px;color:#1b1b1b;letter-spacing:0.4px">Ctrl+Shift+S</div>
<div class="t k" style="left:29px;top:259px;color:#8f8f8f;">将选区保存为(T)...</div>
<div class="t k" style="left:-34px;width:300px;text-align:right;top:259px;color:#8f8f8f;letter-spacing:0.4px">Ctrl+Alt+S</div>
<div class="t k" style="left:29px;top:278px;color:#1b1b1b;">全部保存(V)</div>
<div class="t k" style="left:-34px;width:300px;text-align:right;top:278px;color:#1b1b1b;letter-spacing:0.4px">Ctrl+Shift+Alt+S</div>
<div class="t k" style="left:29px;top:296px;color:#1b1b1b;">将所有音频保存为批处理(B)...</div>
<div class="t k" style="left:29px;top:320px;color:#1b1b1b;">导入(I)</div>
<div class="chev" style="left:268px;top:323px"></div>
<div class="t k" style="left:29px;top:339px;color:#1b1b1b;">导出(E)</div>
<div class="chev" style="left:268px;top:342px"></div>
<div class="t k" style="left:29px;top:363px;color:#1b1b1b;">在媒体浏览器中显示(M)</div>
<div class="t k" style="left:29px;top:381px;color:#1b1b1b;">在资源管理器中显示(P)</div>
<div class="t k" style="left:29px;top:405px;color:#1b1b1b;">退出(X)</div>
<div class="t k" style="left:-34px;width:300px;text-align:right;top:405px;color:#1b1b1b;letter-spacing:0.4px">Ctrl+Q</div>
<div class="a" style="left:25px;top:113px;width:254px;height:1px;background:#d5d5d5;"></div>
<div class="a" style="left:25px;top:137px;width:254px;height:1px;background:#d5d5d5;"></div>
<div class="a" style="left:25px;top:216px;width:254px;height:1px;background:#d5d5d5;"></div>
<div class="a" style="left:25px;top:313px;width:254px;height:1px;background:#d5d5d5;"></div>
<div class="a" style="left:25px;top:356px;width:254px;height:1px;background:#d5d5d5;"></div>
<div class="a" style="left:25px;top:398px;width:254px;height:1px;background:#d5d5d5;"></div>
<div class="a" style="left:279px;top:333px;width:310px;height:246px;background:#f0f0f0;box-shadow:1px 1px 3px rgba(0,0,0,.45)"></div>
<div class="a" style="left:283px;top:438px;width:303px;height:18px;background:#8dc3f5;"></div>
<div class="t k" style="left:307px;top:339px;color:#8f8f8f;">文件(F)...</div>
<div class="t k" style="left:271px;width:300px;text-align:right;top:339px;color:#8f8f8f;letter-spacing:0.4px">Ctrl+Shift+E</div>
<div class="t k" style="left:307px;top:357px;color:#8f8f8f;">范围标记内的音频(A)...</div>
<div class="t k" style="left:307px;top:376px;color:#8f8f8f;">所选标记至 CSV(K)...</div>
<div class="t k" style="left:307px;top:393px;color:#8f8f8f;">将音频刻录到 CD(B)...</div>
<div class="t k" style="left:271px;width:300px;text-align:right;top:393px;color:#8f8f8f;letter-spacing:0.4px">Shift+B</div>
<div class="t k" style="left:307px;top:417px;color:#1b1b1b;">多轨混音(M)</div>
<div class="t k" style="left:307px;top:442px;color:#1b1b1b;letter-spacing:0.4px">导出到 Adobe Premiere Pro(X)...</div>
<div class="t k" style="left:307px;top:460px;color:#1b1b1b;letter-spacing:0.4px">使用 Adobe Media Encoder 导出(X)...</div>
<div class="t k" style="left:307px;top:485px;color:#1b1b1b;">会话(S)...</div>
<div class="t k" style="left:307px;top:503px;color:#1b1b1b;">会话作为模板(L)...</div>
<div class="t k" style="left:307px;top:521px;color:#1b1b1b;">FCP XML 交换格式(F)...</div>
<div class="t k" style="left:307px;top:540px;color:#1b1b1b;">OMF(O)...</div>
<div class="t k" style="left:307px;top:563px;color:#1b1b1b;">应用程序设置(P)...</div>
<div class="chev" style="left:573px;top:419px"></div>
<div class="a" style="left:304px;top:410px;width:281px;height:1px;background:#d5d5d5;"></div>
<div class="a" style="left:304px;top:477px;width:281px;height:1px;background:#d5d5d5;"></div>
<div class="a" style="left:304px;top:556px;width:281px;height:1px;background:#d5d5d5;"></div>
<div class="a" style="left:282px;top:425px;width:335px;height:41px;border:3px solid #84161a;border-radius:6px"></div>
<svg class="a" style="left:459px;top:446px" width="14" height="18"><path d="M1 1 L1 14 L4 11 L6.5 16 L8.5 15 L6 10 L10.5 10 Z" fill="#fff" stroke="#333" stroke-width="1" stroke-linejoin="round"/></svg>
<svg class="a" style="left:0;top:0" width="829" height="695"><line x1="707" y1="278" x2="510" y2="437" stroke="#b01c1e" stroke-width="2.3" stroke-linecap="round"/><polygon points="502,444 506,431 516,442" fill="#e0141c" stroke="#c0121a" stroke-width="1"/></svg>
</body></html>
